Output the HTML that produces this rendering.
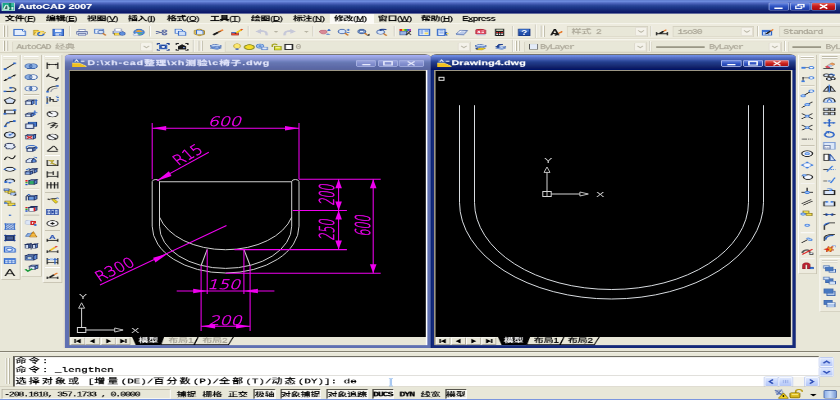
<!DOCTYPE html>
<html lang="zh-CN"><head><meta charset="utf-8"><title>AutoCAD 2007</title>
<style>
html,body{margin:0;padding:0;width:840px;height:400px;overflow:hidden;background:#e8e7d8}
#root{position:absolute;left:0;top:0;width:1024px;height:768px;transform-origin:0 0;transform:scale(0.8203125,0.5208333);overflow:hidden;will-change:transform;background:#e8e7d8;font-family:"Liberation Sans","Noto Sans CJK SC",sans-serif;font-size:12px;color:#000}
#root div,#root span,#root svg{position:absolute;box-sizing:border-box}
#root span{white-space:pre;line-height:1;-webkit-text-stroke:0.35px currentColor}
#root svg{overflow:visible}
.mono{font-family:"Liberation Mono","Noto Sans CJK SC",monospace}
.sim{font-family:"Liberation Mono","Noto Sans CJK SC",monospace;font-size:12px;letter-spacing:-1.3px}
#root i.c{font-style:normal;letter-spacing:0}
.cmd{font-family:"Liberation Mono","Noto Sans CJK SC",monospace;font-size:13.33px}
#root i.w{font-style:normal;letter-spacing:2.67px}
</style></head><body><div id="root">
<div style="left:0.0px;top:0.0px;width:1024.0px;height:26.4px;background:linear-gradient(#5a76c8 0,#7090e2 9%,#5a74ca 18%,#4058b0 30%,#2a4698 41%,#1e3a8c 52%,#182e7e 67%,#12226e 81%,#0a1668 93%,#001070 100%)"></div>
<svg style="left:2.4px;top:5.0px;" width="16" height="16" viewBox="0 0 16 16" preserveAspectRatio="none"><rect width="16" height="16" fill="#18a488"/><rect x="0.5" y="0.5" width="15" height="15" fill="none" stroke="#cfeee4" stroke-width="1"/><path d="M2.5 13L4.5 6Q6 3 7.5 6L8.5 13Z" fill="#3a6a5e" stroke="#e4fbf4" stroke-width="1.5"/><rect x="9.3" y="1" width="2.2" height="14" fill="#0b6a54"/><rect x="11.5" y="1" width="3.5" height="6" fill="#38bc9e"/><rect x="11.8" y="8.5" width="2.6" height="5" fill="#d4f2ea"/><rect x="7" y="9" width="2.6" height="3.4" fill="#c8ece2"/></svg>
<span style="left:22.0px;top:6.0px;color:#fff;font-weight:bold;font-size:13px">AutoCAD 2007</span>
<div style="left:937.0px;top:5.0px;width:25.0px;height:15.0px;background:linear-gradient(#6f8be0,#2f55c4 45%,#1c3aa6);border:1px solid #9fb0e8;border-radius:2px"></div>
<div style="left:963.0px;top:5.0px;width:25.0px;height:15.0px;background:linear-gradient(#6f8be0,#2f55c4 45%,#1c3aa6);border:1px solid #9fb0e8;border-radius:2px"></div>
<div style="left:989.0px;top:5.0px;width:30.0px;height:15.0px;background:linear-gradient(#e0605a,#c81c1c 45%,#a80c10);border:1px solid #9fb0e8;border-radius:2px"></div>
<svg style="left:937.0px;top:5.0px;" width="25" height="15" viewBox="0 0 25 15" preserveAspectRatio="none"><rect x="7" y="9.5" width="10" height="2.6" fill="#fff"/></svg>
<svg style="left:963.0px;top:5.0px;" width="25" height="15" viewBox="0 0 25 15" preserveAspectRatio="none"><rect x="10" y="3.5" width="7" height="5" fill="none" stroke="#fff" stroke-width="1.6"/><rect x="7" y="6.5" width="7" height="5" fill="#2f55c4" stroke="#fff" stroke-width="1.6"/></svg>
<svg style="left:989.0px;top:5.0px;" width="30" height="15" viewBox="0 0 30 15" preserveAspectRatio="none"><path d="M10.5 3.5L19.5 11.5M19.5 3.5L10.5 11.5" stroke="#fff" stroke-width="2.4"/></svg>
<div style="left:0.0px;top:26.0px;width:1024.0px;height:19.0px;background:#e8e7d8"></div>
<div style="left:402.3px;top:27.0px;width:53.6px;height:18.0px;background:#fbfaf6"></div>
<span style="left:6.1px;top:30.0px;font-size:12px;font-weight:500;letter-spacing:-0.4px">文件(<u>F</u>)</span>
<span style="left:56.1px;top:30.0px;font-size:12px;font-weight:500;letter-spacing:-0.4px">编辑(<u>E</u>)</span>
<span style="left:106.1px;top:30.0px;font-size:12px;font-weight:500;letter-spacing:-0.4px">视图(<u>V</u>)</span>
<span style="left:156.0px;top:30.0px;font-size:12px;font-weight:500;letter-spacing:-0.4px">插入(<u>I</u>)</span>
<span style="left:203.6px;top:30.0px;font-size:12px;font-weight:500;letter-spacing:-0.4px">格式(<u>O</u>)</span>
<span style="left:256.0px;top:30.0px;font-size:12px;font-weight:500;letter-spacing:-0.4px">工具(<u>T</u>)</span>
<span style="left:306.0px;top:30.0px;font-size:12px;font-weight:500;letter-spacing:-0.4px">绘图(<u>D</u>)</span>
<span style="left:357.2px;top:30.0px;font-size:12px;font-weight:500;letter-spacing:-0.4px">标注(<u>N</u>)</span>
<span style="left:407.2px;top:30.0px;font-size:12px;font-weight:500;letter-spacing:-0.4px">修改(<u>M</u>)</span>
<span style="left:460.8px;top:30.0px;font-size:12px;font-weight:500;letter-spacing:-0.4px">窗口(<u>W</u>)</span>
<span style="left:513.2px;top:30.0px;font-size:12px;font-weight:500;letter-spacing:-0.4px">帮助(<u>H</u>)</span>
<span style="left:563.2px;top:30.0px;font-size:12px;font-weight:500;letter-spacing:-0.4px">E<u>x</u>press</span>
<div style="left:0.0px;top:45.0px;width:1024.0px;height:56.0px;background:#edebde"></div>
<div style="left:0.0px;top:45.0px;width:1024.0px;height:1.0px;background:#fdfcf8"></div>
<div style="left:0.0px;top:74.0px;width:1024.0px;height:1.0px;background:#d5d1c0"></div>
<div style="left:0.0px;top:75.0px;width:1024.0px;height:1.0px;background:#fbfaf5"></div>
<div style="left:0.0px;top:100.0px;width:1024.0px;height:1.0px;background:#cfcbb9"></div>
<div style="left:4.0px;top:49.0px;width:2.0px;height:22.0px;background:#fff;border-right:1px solid #b4b09c"></div>
<div style="left:8.0px;top:49.0px;width:2.0px;height:22.0px;background:#fff;border-right:1px solid #b4b09c"></div>
<svg style="left:16.2px;top:53.5px;" width="16" height="16" viewBox="0 0 16 16" preserveAspectRatio="none"><path d="M1 2.5H11.5L15 6V14H1Z" fill="#e6effc" stroke="#2c64c8" stroke-width="1.3"/><path d="M11.5 2.5V6H15" fill="#fff" stroke="#2c64c8" stroke-width="1"/></svg>
<svg style="left:39.6px;top:53.5px;" width="16" height="16" viewBox="0 0 16 16" preserveAspectRatio="none"><path d="M1 4H6L7.5 5.5H13V13.5H1Z" fill="#f6d24a" stroke="#b08a14" stroke-width="1"/><path d="M1 13.5L3.5 7.5H15.5L13 13.5Z" fill="#fbe48a" stroke="#b08a14" stroke-width="1"/><path d="M9 8.5A3.5 3 0 1 0 13 12" fill="none" stroke="#2c64c8" stroke-width="1.8"/><path d="M11.5 13.8L14.8 12L12.2 10Z" fill="#2c64c8" stroke="none" stroke-width="1.2"/></svg>
<svg style="left:63.0px;top:53.5px;" width="16" height="16" viewBox="0 0 16 16" preserveAspectRatio="none"><rect x="1.5" y="2" width="13" height="12.5" fill="#4a80dc" stroke="#2c54ac" stroke-width="1"/><rect x="4" y="2.5" width="8" height="5.5" fill="#eef4fd" stroke="none" stroke-width="1"/><rect x="4.5" y="10" width="7" height="4.5" fill="#c8d8f2" stroke="none" stroke-width="1"/><rect x="9" y="10.8" width="1.8" height="3" fill="#4a80dc" stroke="none" stroke-width="1"/></svg>
<div style="left:84.1px;top:50.0px;width:1.0px;height:20.0px;background:#c5c2b2"></div>
<div style="left:85.1px;top:50.0px;width:1.0px;height:20.0px;background:#fff"></div>
<svg style="left:92.4px;top:53.5px;" width="16" height="16" viewBox="0 0 16 16" preserveAspectRatio="none"><rect x="4" y="2.5" width="8" height="4" fill="#fff" stroke="#8a96bc" stroke-width="1"/><path d="M1.5 6.5H14.5V12H1.5Z" fill="#c4cee6" stroke="#6a78a8" stroke-width="1"/><rect x="3.5" y="10.5" width="9" height="3.5" fill="#f2f5fb" stroke="#6a78a8" stroke-width="1"/><ellipse cx="8" cy="13.5" rx="5" ry="1.2" fill="#9aa8cc" stroke="none" stroke-width="1.2"/></svg>
<svg style="left:114.3px;top:53.5px;" width="16" height="16" viewBox="0 0 16 16" preserveAspectRatio="none"><path d="M1.5 2H12V10H1.5Z" fill="#e6effc" stroke="#2c64c8" stroke-width="1.2"/><ellipse cx="9" cy="7.5" rx="3.6" ry="3.4" fill="#d4e4fa" stroke="#5070b0" stroke-width="1.4"/><line x1="11.5" y1="10" x2="15" y2="14" stroke="#c87830" stroke-width="2.2"/></svg>
<svg style="left:137.1px;top:53.5px;" width="16" height="16" viewBox="0 0 16 16" preserveAspectRatio="none"><rect x="3" y="1.5" width="8" height="4" fill="#fff" stroke="#6a78a8" stroke-width="1"/><path d="M1 5.5H13V11H1Z" fill="#b8c4e0" stroke="#4a5a90" stroke-width="1"/><rect x="2.5" y="9.5" width="8" height="4" fill="#f6d84a" stroke="#a08418" stroke-width="1"/><ellipse cx="12" cy="10.5" rx="3.5" ry="3.5" fill="#5f8fdc" stroke="#24489c" stroke-width="1"/></svg>
<svg style="left:160.5px;top:53.5px;" width="16" height="16" viewBox="0 0 16 16" preserveAspectRatio="none"><ellipse cx="8.5" cy="8" rx="6.5" ry="6" fill="#4f8fe0" stroke="#2c5cb0" stroke-width="1"/><path d="M3.5 6Q8 2 13.5 6Q9 8.5 3.5 6Z" fill="#f2a030" stroke="none" stroke-width="1.2"/><path d="M4 11Q8 14 13 10.5Q8 9 4 11Z" fill="#58b858" stroke="none" stroke-width="1.2"/><path d="M1 12L6 9.5L8 13.5L2.5 15Z" fill="#e4ecf8" stroke="#9aa8cc" stroke-width="0.8"/></svg>
<div style="left:181.6px;top:50.0px;width:1.0px;height:20.0px;background:#c5c2b2"></div>
<div style="left:182.6px;top:50.0px;width:1.0px;height:20.0px;background:#fff"></div>
<svg style="left:189.0px;top:53.5px;" width="16" height="16" viewBox="0 0 16 16" preserveAspectRatio="none"><line x1="1" y1="6" x2="9" y2="8.5" stroke="#5a6a9c" stroke-width="1.6"/><line x1="1" y1="10.5" x2="9" y2="7.5" stroke="#5a6a9c" stroke-width="1.6"/><ellipse cx="11.5" cy="5.5" rx="2.3" ry="2" fill="none" stroke="#3c5098" stroke-width="1.6"/><ellipse cx="11.5" cy="11" rx="2.3" ry="2" fill="none" stroke="#3c5098" stroke-width="1.6"/></svg>
<svg style="left:212.1px;top:53.5px;" width="16" height="16" viewBox="0 0 16 16" preserveAspectRatio="none"><path d="M1.5 2H8.5L10.5 4V10H1.5Z" fill="#e6effc" stroke="#2c64c8" stroke-width="1.2"/><path d="M5.5 6H12.5L14.5 8V14H5.5Z" fill="#cfe0f8" stroke="#2c64c8" stroke-width="1.2"/></svg>
<svg style="left:234.7px;top:53.5px;" width="16" height="16" viewBox="0 0 16 16" preserveAspectRatio="none"><path d="M2 4.5L8 1.5L14.5 5V12L8 15L2 11.5Z" fill="#e8c860" stroke="#a07c20" stroke-width="1"/><path d="M4.5 4H10.5L12.5 6V11.5H4.5Z" fill="#dbe8fa" stroke="#2c64c8" stroke-width="1.1"/></svg>
<svg style="left:258.4px;top:53.5px;" width="16" height="16" viewBox="0 0 16 16" preserveAspectRatio="none"><line x1="2" y1="13" x2="8" y2="8" stroke="#1a1a1a" stroke-width="3"/><line x1="8" y1="8" x2="11" y2="5.5" stroke="#8a5020" stroke-width="2.6"/><line x1="11" y1="5.5" x2="14" y2="3" stroke="#f08030" stroke-width="2.4"/></svg>
<svg style="left:281.0px;top:53.5px;" width="16" height="16" viewBox="0 0 16 16" preserveAspectRatio="none"><rect x="1.5" y="8" width="8" height="5.5" fill="#e84830" stroke="#902010" stroke-width="1"/><rect x="1.5" y="8" width="8" height="2" fill="#3c72d4" stroke="none" stroke-width="1"/><line x1="7" y1="9" x2="13.5" y2="3" stroke="#f2c81c" stroke-width="2.6"/><line x1="12.5" y1="4" x2="14.5" y2="2" stroke="#e05020" stroke-width="2.4"/><line x1="5.5" y1="10.5" x2="7" y2="9" stroke="#1a1a1a" stroke-width="1.6"/></svg>
<div style="left:302.3px;top:50.0px;width:1.0px;height:20.0px;background:#c5c2b2"></div>
<div style="left:303.3px;top:50.0px;width:1.0px;height:20.0px;background:#fff"></div>
<svg style="left:310.9px;top:53.5px;" width="16" height="16" viewBox="0 0 16 16" preserveAspectRatio="none"><path d="M14 14Q15 4.5 6 5.5" fill="none" stroke="#c6c8d8" stroke-width="3"/><path d="M0.5 6.5L7 1.5V11Z" fill="#c6c8d8" stroke="none" stroke-width="1.2"/></svg>
<svg style="left:333.4px;top:53.0px;" width="8" height="16" viewBox="0 0 8 16" preserveAspectRatio="none"><path d="M1 7L3.5 10L6 7Z" fill="#b5b2a2"/></svg>
<svg style="left:345.0px;top:53.5px;" width="16" height="16" viewBox="0 0 16 16" preserveAspectRatio="none"><path d="M2 14Q1 4.5 10 5.5" fill="none" stroke="#c6c8d8" stroke-width="3"/><path d="M15.5 6.5L9 1.5V11Z" fill="#c6c8d8" stroke="none" stroke-width="1.2"/></svg>
<svg style="left:370.0px;top:53.0px;" width="8" height="16" viewBox="0 0 8 16" preserveAspectRatio="none"><path d="M1 7L3.5 10L6 7Z" fill="#b5b2a2"/></svg>
<div style="left:381.0px;top:50.0px;width:1.0px;height:20.0px;background:#c5c2b2"></div>
<div style="left:382.0px;top:50.0px;width:1.0px;height:20.0px;background:#fff"></div>
<svg style="left:388.3px;top:53.5px;" width="16" height="16" viewBox="0 0 16 16" preserveAspectRatio="none"><path d="M1.5 6Q3 3 6 4Q9 2.5 10.5 6Q11 10 7 11.5Q2 11 1.5 6Z" fill="#d88a98" stroke="#b86878" stroke-width="1"/><line x1="11" y1="4" x2="15" y2="4" stroke="#2c64c8" stroke-width="1.6"/><line x1="13" y1="2" x2="13" y2="6" stroke="#2c64c8" stroke-width="1.6"/><path d="M10 11Q13 9.5 14.5 12.5H9.5Z" fill="#2c64c8" stroke="none" stroke-width="1.2"/></svg>
<svg style="left:411.4px;top:53.5px;" width="16" height="16" viewBox="0 0 16 16" preserveAspectRatio="none"><ellipse cx="6" cy="6.5" rx="4.6" ry="4.3" fill="#d8e6fa" stroke="#5070b0" stroke-width="1.5"/><line x1="9.5" y1="9.5" x2="13.5" y2="14" stroke="#c87830" stroke-width="2.3"/><line x1="11.5" y1="3.5" x2="15.5" y2="3.5" stroke="#2c64c8" stroke-width="1.5"/><line x1="13.5" y1="1.5" x2="13.5" y2="5.5" stroke="#2c64c8" stroke-width="1.5"/><line x1="11.5" y1="8" x2="15" y2="8" stroke="#2c64c8" stroke-width="1.5"/></svg>
<svg style="left:434.8px;top:53.5px;" width="16" height="16" viewBox="0 0 16 16" preserveAspectRatio="none"><ellipse cx="6" cy="6.5" rx="4.6" ry="4.3" fill="#a8c4f0" stroke="#40609c" stroke-width="1.5"/><rect x="3.5" y="4.5" width="5" height="3.5" fill="#e8f0fc" stroke="#40609c" stroke-width="0.8"/><line x1="9.5" y1="9.5" x2="12.5" y2="13" stroke="#c87830" stroke-width="2.3"/><path d="M12 14.5H15.5V10.5Z" fill="#111" stroke="none" stroke-width="1.2"/></svg>
<svg style="left:457.8px;top:53.5px;" width="16" height="16" viewBox="0 0 16 16" preserveAspectRatio="none"><ellipse cx="6" cy="7.5" rx="4.6" ry="4.3" fill="#d8e6fa" stroke="#5070b0" stroke-width="1.5"/><line x1="9.5" y1="10.5" x2="13.5" y2="14.5" stroke="#c87830" stroke-width="2.3"/><path d="M5 3.5Q9 0.5 13 3.5" fill="none" stroke="#1c3c8c" stroke-width="2"/><path d="M3 3.8L7.5 1.2V6Z" fill="#1c3c8c" stroke="none" stroke-width="1.2"/></svg>
<div style="left:480.3px;top:50.0px;width:1.0px;height:20.0px;background:#c5c2b2"></div>
<div style="left:481.3px;top:50.0px;width:1.0px;height:20.0px;background:#fff"></div>
<svg style="left:485.8px;top:53.5px;" width="16" height="16" viewBox="0 0 16 16" preserveAspectRatio="none"><rect x="1" y="2" width="3" height="3" fill="#e02020" stroke="none" stroke-width="1"/><rect x="4" y="2" width="3" height="3" fill="#f0d020" stroke="none" stroke-width="1"/><rect x="7" y="2" width="3" height="3" fill="#30b040" stroke="none" stroke-width="1"/><rect x="10" y="2" width="3" height="3" fill="#3060e0" stroke="none" stroke-width="1"/><rect x="13" y="2" width="2" height="3" fill="#c030c0" stroke="none" stroke-width="1"/><rect x="1.5" y="6" width="8" height="7" fill="#9ab4e4" stroke="#40609c" stroke-width="1"/><line x1="9" y1="13.5" x2="14.5" y2="5.5" stroke="#303030" stroke-width="2"/><line x1="10" y1="6" x2="15" y2="13" stroke="#505050" stroke-width="1.6"/></svg>
<svg style="left:509.0px;top:53.5px;" width="16" height="16" viewBox="0 0 16 16" preserveAspectRatio="none"><rect x="1.5" y="2" width="13" height="12" fill="#e8f0fc" stroke="#2c64c8" stroke-width="1.6"/><rect x="3.5" y="4" width="3.5" height="8" fill="#9ab8ec" stroke="none" stroke-width="1"/><rect x="8.5" y="4" width="4.5" height="3.5" fill="#9ab8ec" stroke="none" stroke-width="1"/><rect x="8.5" y="8.5" width="4.5" height="3.5" fill="#f2dc60" stroke="none" stroke-width="1"/></svg>
<svg style="left:532.4px;top:53.5px;" width="16" height="16" viewBox="0 0 16 16" preserveAspectRatio="none"><rect x="1.5" y="2" width="9" height="12" fill="#e8f0fc" stroke="#2c64c8" stroke-width="1.6"/><rect x="3.5" y="4" width="5" height="2.5" fill="#9ab8ec" stroke="none" stroke-width="1"/><rect x="3.5" y="8" width="5" height="2.5" fill="#9ab8ec" stroke="none" stroke-width="1"/><path d="M10 6L15 10L12.5 10.5L13.8 14L12.2 14.5L11 11.3L9.5 13Z" fill="#2050b0" stroke="none" stroke-width="1.2"/><rect x="12" y="9" width="3" height="3" fill="#f2dc60" stroke="none" stroke-width="1"/></svg>
<svg style="left:555.3px;top:53.5px;" width="16" height="16" viewBox="0 0 16 16" preserveAspectRatio="none"><path d="M1 11L6 4L15 4.5L11 12Z" fill="#b8c8e8" stroke="#6078b0" stroke-width="1"/><path d="M1 11L11 12V14L1 13Z" fill="#8098c8" stroke="none" stroke-width="1.2"/><path d="M4 9L7 5.5L12 6" fill="none" stroke="#fff" stroke-width="1.2"/></svg>
<svg style="left:578.4px;top:53.5px;" width="16" height="16" viewBox="0 0 16 16" preserveAspectRatio="none"><path d="M2 3Q8 1 14 3.5V11Q8 13.5 2 11Z" fill="#e04860" stroke="#a02030" stroke-width="1"/><path d="M4.5 5L7 9M7 5L4.5 9M9 5.5H12M9 8H12" fill="none" stroke="#fff" stroke-width="1.4"/><rect x="3" y="11.5" width="11" height="2.5" fill="#c0c8e0" stroke="none" stroke-width="1"/></svg>
<svg style="left:601.0px;top:53.5px;" width="16" height="16" viewBox="0 0 16 16" preserveAspectRatio="none"><rect x="2.5" y="1" width="11" height="14" fill="#181818" stroke="none" stroke-width="1"/><rect x="4" y="2.5" width="8" height="3" fill="#c8d8c0" stroke="none" stroke-width="1"/><rect x="4" y="7" width="2" height="2" fill="#e03030" stroke="none" stroke-width="1"/><rect x="7" y="7" width="2" height="2" fill="#e03030" stroke="none" stroke-width="1"/><rect x="10" y="7" width="2" height="2" fill="#e03030" stroke="none" stroke-width="1"/><rect x="4" y="10.5" width="2" height="2.5" fill="#e8e8e8" stroke="none" stroke-width="1"/><rect x="7" y="10.5" width="2" height="2.5" fill="#e8e8e8" stroke="none" stroke-width="1"/><rect x="10" y="10.5" width="2" height="2.5" fill="#e8e8e8" stroke="none" stroke-width="1"/></svg>
<div style="left:623.8px;top:50.0px;width:1.0px;height:20.0px;background:#c5c2b2"></div>
<div style="left:624.8px;top:50.0px;width:1.0px;height:20.0px;background:#fff"></div>
<svg style="left:630.9px;top:53.5px;" width="16" height="16" viewBox="0 0 16 16" preserveAspectRatio="none"><rect x="1" y="1.5" width="14" height="13" fill="#2250ac" stroke="#12307c" stroke-width="1"/><rect x="2" y="2.5" width="12" height="4" fill="#4a7cd0" stroke="none" stroke-width="1"/><text x="8" y="13" font-family="Liberation Sans, sans-serif" font-weight="bold" font-size="12.5" fill="#fff" text-anchor="middle">?</text></svg>
<div style="left:652.2px;top:47.0px;width:1.0px;height:26.0px;background:#c5c2b2"></div>
<div style="left:653.2px;top:47.0px;width:1.0px;height:26.0px;background:#fff"></div>
<div style="left:658.3px;top:49.0px;width:2.0px;height:22.0px;background:#fff;border-right:1px solid #b4b09c"></div>
<div style="left:662.3px;top:49.0px;width:2.0px;height:22.0px;background:#fff;border-right:1px solid #b4b09c"></div>
<svg style="left:669.9px;top:53.5px;" width="16" height="16" viewBox="0 0 16 16" preserveAspectRatio="none"><text x="6.5" y="14" font-family="Liberation Sans, sans-serif" font-weight="bold" font-size="17" fill="#151515" text-anchor="middle">A</text><line x1="6.5" y1="14" x2="11" y2="10" stroke="#1a1a1a" stroke-width="2.6"/><line x1="11" y1="10" x2="15.5" y2="6.5" stroke="#e87828" stroke-width="2.4"/></svg>
<div style="left:691.2px;top:50.0px;width:98.7px;height:21.0px;background:#e8e7d8;border:1px solid #d8d4c4;border-top-color:#c9c5b4"></div>
<span class="sim" style="left:696.7px;top:55.6px;color:#aca899;"><i class="c">样式</i> 2</span>
<div style="left:773.9px;top:52.0px;width:15.0px;height:17.0px;background:#f4f2ea;border:1px solid #dedace;border-radius:2px"></div>
<svg style="left:773.9px;top:52.0px;" width="15" height="17" viewBox="0 0 15 17" preserveAspectRatio="none"><path d="M4 6.5L7.5 10.0L11 6.5" stroke="#b9b6a6" stroke-width="1.6" fill="none"/></svg>
<div style="left:793.0px;top:50.0px;width:1.0px;height:20.0px;background:#c5c2b2"></div>
<div style="left:794.0px;top:50.0px;width:1.0px;height:20.0px;background:#fff"></div>
<svg style="left:799.1px;top:53.5px;" width="16" height="16" viewBox="0 0 16 16" preserveAspectRatio="none"><line x1="1" y1="11" x2="15" y2="11" stroke="#1a1a1a" stroke-width="1.8"/><line x1="1.5" y1="8" x2="1.5" y2="14" stroke="#1a1a1a" stroke-width="1.6"/><line x1="14.5" y1="8" x2="14.5" y2="14" stroke="#1a1a1a" stroke-width="1.6"/><line x1="5" y1="10.5" x2="10" y2="6" stroke="#1a1a1a" stroke-width="2.6"/><line x1="10" y1="6" x2="13.5" y2="3" stroke="#e87828" stroke-width="2.2"/></svg>
<div style="left:820.4px;top:50.0px;width:98.7px;height:21.0px;background:#e8e7d8;border:1px solid #d8d4c4;border-top-color:#c9c5b4"></div>
<span class="sim" style="left:825.9px;top:55.6px;color:#aca899;">iso30</span>
<div style="left:903.2px;top:52.0px;width:15.0px;height:17.0px;background:#f4f2ea;border:1px solid #dedace;border-radius:2px"></div>
<svg style="left:903.2px;top:52.0px;" width="15" height="17" viewBox="0 0 15 17" preserveAspectRatio="none"><path d="M4 6.5L7.5 10.0L11 6.5" stroke="#b9b6a6" stroke-width="1.6" fill="none"/></svg>
<div style="left:922.8px;top:50.0px;width:1.0px;height:20.0px;background:#c5c2b2"></div>
<div style="left:923.8px;top:50.0px;width:1.0px;height:20.0px;background:#fff"></div>
<svg style="left:928.3px;top:53.5px;" width="16" height="16" viewBox="0 0 16 16" preserveAspectRatio="none"><rect x="1.5" y="4" width="11" height="9.5" fill="#dce8fa" stroke="#2c64c8" stroke-width="1.4"/><rect x="1.5" y="4" width="11" height="3" fill="#3c72d4" stroke="none" stroke-width="1"/><line x1="5" y1="7" x2="5" y2="13.5" stroke="#2c64c8" stroke-width="1"/><line x1="9" y1="7" x2="9" y2="13.5" stroke="#2c64c8" stroke-width="1"/><line x1="6" y1="11" x2="11" y2="6" stroke="#1a1a1a" stroke-width="2.4"/><line x1="11" y1="6" x2="14.5" y2="2.5" stroke="#e87828" stroke-width="2.2"/></svg>
<div style="left:949.6px;top:50.0px;width:98.7px;height:21.0px;background:#e8e7d8;border:1px solid #d8d4c4;border-top-color:#c9c5b4"></div>
<span class="sim" style="left:955.1px;top:55.6px;color:#aca899;">Standard</span>
<div style="left:1032.4px;top:52.0px;width:15.0px;height:17.0px;background:#f4f2ea;border:1px solid #dedace;border-radius:2px"></div>
<svg style="left:1032.4px;top:52.0px;" width="15" height="17" viewBox="0 0 15 17" preserveAspectRatio="none"><path d="M4 6.5L7.5 10.0L11 6.5" stroke="#b9b6a6" stroke-width="1.6" fill="none"/></svg>
<div style="left:4.0px;top:78.0px;width:2.0px;height:20.0px;background:#fff;border-right:1px solid #b4b09c"></div>
<div style="left:8.0px;top:78.0px;width:2.0px;height:20.0px;background:#fff;border-right:1px solid #b4b09c"></div>
<div style="left:14.6px;top:79.5px;width:171.9px;height:20.0px;background:#e8e7d8;border:1px solid #d8d4c4;border-top-color:#c9c5b4"></div>
<span class="sim" style="left:20.1px;top:85.1px;color:#aca899;">AutoCAD <i class="c">经典</i></span>
<div style="left:170.5px;top:81.5px;width:15.0px;height:16.0px;background:#f4f2ea;border:1px solid #dedace;border-radius:2px"></div>
<svg style="left:170.5px;top:81.5px;" width="15" height="16" viewBox="0 0 15 16" preserveAspectRatio="none"><path d="M4 6.0L7.5 9.5L11 6.0" stroke="#b9b6a6" stroke-width="1.6" fill="none"/></svg>
<svg style="left:190.8px;top:81.5px;" width="16" height="16" viewBox="0 0 16 16" preserveAspectRatio="none"><path d="M1 4V1.5H4M12 1.5H15V4M15 12V14.5H12M4 14.5H1V12" fill="none" stroke="#1c3c8c" stroke-width="1.5"/><rect x="3" y="3.5" width="10" height="9" fill="#3c6cc8" stroke="none" stroke-width="1"/><ellipse cx="8" cy="8" rx="2.8" ry="2.6" fill="#e8f0fc" stroke="#1c3c8c" stroke-width="1.3"/></svg>
<svg style="left:213.9px;top:81.5px;" width="16" height="16" viewBox="0 0 16 16" preserveAspectRatio="none"><path d="M1 4V1.5H4M12 1.5H15V4M15 12V14.5H12M4 14.5H1V12" fill="none" stroke="#222" stroke-width="1.5"/><path d="M3 13V7L8 3L13 7V13Z" fill="#181818" stroke="none" stroke-width="1.2"/><rect x="9" y="8" width="2.5" height="2.5" fill="#7090d0" stroke="none" stroke-width="1"/></svg>
<div style="left:235.3px;top:76.0px;width:1.0px;height:24.0px;background:#c5c2b2"></div>
<div style="left:236.3px;top:76.0px;width:1.0px;height:24.0px;background:#fff"></div>
<div style="left:240.8px;top:78.0px;width:2.0px;height:20.0px;background:#fff;border-right:1px solid #b4b09c"></div>
<div style="left:244.8px;top:78.0px;width:2.0px;height:20.0px;background:#fff;border-right:1px solid #b4b09c"></div>
<svg style="left:254.8px;top:81.5px;" width="16" height="16" viewBox="0 0 16 16" preserveAspectRatio="none"><path d="M1 10.5L6 8L15 10L10 13Z" fill="#7ca4e4" stroke="#3058a8" stroke-width="0.8"/><path d="M1 8L6 5.5L15 7.5L10 10.5Z" fill="#a4c0ee" stroke="#3058a8" stroke-width="0.8"/><path d="M1 5.5L6 3L15 5L10 8Z" fill="#c8dcf8" stroke="#3058a8" stroke-width="0.8"/></svg>
<div style="left:274.3px;top:79.5px;width:299.9px;height:20.0px;background:#e8e7d8;border:1px solid #d8d4c4;border-top-color:#c9c5b4"></div>
<div style="left:558.2px;top:81.5px;width:15.0px;height:16.0px;background:#f4f2ea;border:1px solid #dedace;border-radius:2px"></div>
<svg style="left:558.2px;top:81.5px;" width="15" height="16" viewBox="0 0 15 16" preserveAspectRatio="none"><path d="M4 6.0L7.5 9.5L11 6.0" stroke="#b9b6a6" stroke-width="1.6" fill="none"/></svg>
<svg style="left:281.0px;top:81.5px;" width="16" height="16" viewBox="0 0 16 16" preserveAspectRatio="none"><ellipse cx="8" cy="6.5" rx="4.2" ry="4.6" fill="#fbe870" stroke="#b09420" stroke-width="1"/><rect x="6.3" y="11" width="3.4" height="3" fill="#5070c0" stroke="none" stroke-width="1"/></svg>
<svg style="left:295.6px;top:81.5px;" width="16" height="16" viewBox="0 0 16 16" preserveAspectRatio="none"><ellipse cx="8" cy="8.5" rx="6" ry="4.6" fill="#f4dc28" stroke="#8a8a20" stroke-width="1.6"/></svg>
<svg style="left:310.9px;top:81.5px;" width="16" height="16" viewBox="0 0 16 16" preserveAspectRatio="none"><ellipse cx="6" cy="6.5" rx="4.6" ry="4.2" fill="#a8c8f4" stroke="#5080c8" stroke-width="1.2"/><path d="M3 6.5H9M6 3V10M4 4.2L8 8.8M8 4.2L4 8.8" fill="none" stroke="#5080c8" stroke-width="0.8"/><rect x="8" y="8.5" width="7" height="5" fill="#dce8fa" stroke="#5078c0" stroke-width="1.2"/></svg>
<svg style="left:329.1px;top:81.5px;" width="16" height="16" viewBox="0 0 16 16" preserveAspectRatio="none"><path d="M3 8V5.5Q3 2.5 6 2.5Q8.5 2.5 8.5 5" fill="none" stroke="#a4a420" stroke-width="2"/><rect x="5.5" y="7" width="8.5" height="7" fill="#d8dc30" stroke="#8a8a18" stroke-width="1"/><rect x="7" y="8.5" width="5" height="2" fill="#f4f6a0" stroke="none" stroke-width="1"/></svg>
<svg style="left:345.6px;top:81.5px;" width="16" height="16" viewBox="0 0 16 16" preserveAspectRatio="none"><rect x="1.5" y="3" width="9" height="10" fill="#fff" stroke="#222" stroke-width="1.8"/></svg>
<span class="sim" style="left:360.2px;top:85.0px;color:#aca899">0</span>
<svg style="left:577.8px;top:81.5px;" width="16" height="16" viewBox="0 0 16 16" preserveAspectRatio="none"><path d="M1 8L6 5.5L15 7.5L10 10.5Z" fill="#a4c0ee" stroke="#3058a8" stroke-width="0.8"/><path d="M1 5.5L6 3L15 5L10 8Z" fill="#c8dcf8" stroke="#3058a8" stroke-width="0.8"/><path d="M2 13.5L7 10L14 10.5L10 14Z" fill="#f2d020" stroke="#a08418" stroke-width="0.8"/><path d="M1 11L4.5 9V13.5Z" fill="#1c3c8c" stroke="none" stroke-width="1.2"/></svg>
<svg style="left:601.6px;top:81.5px;" width="16" height="16" viewBox="0 0 16 16" preserveAspectRatio="none"><path d="M2 10.5L7 8.5L15 10L10 13Z" fill="#a4c0ee" stroke="#3058a8" stroke-width="0.8"/><path d="M2 8L7 6L15 7.5L10 10.5Z" fill="#c8dcf8" stroke="#3058a8" stroke-width="0.8"/><path d="M5 8Q4 2.5 11 3.5" fill="none" stroke="#1c3c8c" stroke-width="2.2"/><path d="M1.5 6.5L7.5 5.5L5.5 10Z" fill="#1c3c8c" stroke="none" stroke-width="1.2"/></svg>
<div style="left:623.8px;top:76.0px;width:1.0px;height:24.0px;background:#c5c2b2"></div>
<div style="left:624.8px;top:76.0px;width:1.0px;height:24.0px;background:#fff"></div>
<div style="left:628.4px;top:78.0px;width:2.0px;height:20.0px;background:#fff;border-right:1px solid #b4b09c"></div>
<div style="left:632.4px;top:78.0px;width:2.0px;height:20.0px;background:#fff;border-right:1px solid #b4b09c"></div>
<div style="left:638.8px;top:79.5px;width:149.9px;height:20.0px;background:#e8e7d8;border:1px solid #d8d4c4;border-top-color:#c9c5b4"></div>
<div style="left:772.7px;top:81.5px;width:15.0px;height:16.0px;background:#f4f2ea;border:1px solid #dedace;border-radius:2px"></div>
<svg style="left:772.7px;top:81.5px;" width="15" height="16" viewBox="0 0 15 16" preserveAspectRatio="none"><path d="M4 6.0L7.5 9.5L11 6.0" stroke="#b9b6a6" stroke-width="1.6" fill="none"/></svg>
<svg style="left:644.9px;top:84.0px;" width="12" height="12" viewBox="0 0 12 12" preserveAspectRatio="none"><rect x="0.5" y="0.5" width="10" height="10" fill="#e4ecf8" stroke="#555"/></svg>
<span class="sim" style="left:658.3px;top:85.0px;color:#aca899">ByLayer</span>
<div style="left:790.6px;top:79.0px;width:1.0px;height:19.0px;background:#c5c2b2"></div>
<div style="left:791.6px;top:79.0px;width:1.0px;height:19.0px;background:#fff"></div>
<div style="left:794.2px;top:79.5px;width:159.1px;height:20.0px;background:#e8e7d8;border:1px solid #d8d4c4;border-top-color:#c9c5b4"></div>
<div style="left:937.3px;top:81.5px;width:15.0px;height:16.0px;background:#f4f2ea;border:1px solid #dedace;border-radius:2px"></div>
<svg style="left:937.3px;top:81.5px;" width="15" height="16" viewBox="0 0 15 16" preserveAspectRatio="none"><path d="M4 6.0L7.5 9.5L11 6.0" stroke="#b9b6a6" stroke-width="1.6" fill="none"/></svg>
<div style="left:799.7px;top:89.0px;width:59.7px;height:2.6px;background:#9a9786"></div>
<span class="sim" style="left:864.3px;top:85.0px;color:#aca899">ByLayer</span>
<div style="left:956.3px;top:79.0px;width:1.0px;height:19.0px;background:#c5c2b2"></div>
<div style="left:957.3px;top:79.0px;width:1.0px;height:19.0px;background:#fff"></div>
<div style="left:960.6px;top:79.5px;width:158.5px;height:20.0px;background:#e8e7d8;border:1px solid #d8d4c4;border-top-color:#c9c5b4"></div>
<div style="left:966.1px;top:89.0px;width:34.7px;height:2.6px;background:#9a9786"></div>
<span class="sim" style="left:1006.3px;top:85.0px;color:#aca899">ByLayer</span>
<div style="left:76.0px;top:101.0px;width:896.0px;height:568.0px;background:#e6e3d3"></div>
<div style="left:0.0px;top:101.0px;width:76.5px;height:567.0px;background:#e8e7d8"></div>
<div style="left:971.6px;top:101.0px;width:52.4px;height:567.0px;background:#e8e7d8"></div>
<div style="left:0.0px;top:668.0px;width:1024.0px;height:100.0px;background:#e8e7d8"></div>
<div style="left:79.4px;top:103.8px;width:445.4px;height:564.4px;background:#726e60;border-radius:7px 7px 0 0"></div>
<div style="left:79.4px;top:105.2px;width:445.4px;height:563.0px;background:#5f70b2;border-radius:6px 6px 0 0"></div>
<div style="left:79.4px;top:105.2px;width:445.4px;height:29.0px;background:linear-gradient(#a4aef4 0,#a4aef4 6%,#98a2e0 18%,#8894d0 31%,#7c8ac8 38%,#6a7cb8 48%,#6474b0 58%,#6270ac 68%,#5c6aa8 81%,#5a66a0 95%);border-radius:6px 6px 0 0"></div>
<div style="left:83.7px;top:134.0px;width:436.9px;height:529.0px;background:#9c9684"></div>
<div style="left:518.6px;top:135.0px;width:2.0px;height:528.0px;background:#fff"></div>
<div style="left:85.3px;top:136.0px;width:433.3px;height:510.5px;background:#000"></div>
<div style="left:85.3px;top:646.5px;width:433.3px;height:16.5px;background:#e8e7d8"></div>
<svg style="left:86.9px;top:112.2px;" width="19" height="18" viewBox="0 0 18 16" preserveAspectRatio="none"><path d="M1 15L1 8L9 8L17 13L17 15Z" fill="#f0c020"/><path d="M1 8L9 8L17 13L17 15" fill="none" stroke="#fff4b0" stroke-width="0.8"/><rect x="2" y="2" width="9" height="5" fill="#4868b8"/><path d="M4 6L6 2.5L8 6" stroke="#fff" stroke-width="1.2" fill="none"/><rect x="11" y="4" width="4" height="2" fill="#d8e0f0"/></svg>
<span style="left:106.5px;top:114.2px;color:#e2e5fb;font-weight:bold;font-size:13px;letter-spacing:1.1px">D:\xh-cad整理\xh测验\c椅子.dwg</span>
<div style="left:486.3px;top:114.8px;width:30.5px;height:13.4px;background:linear-gradient(#a0aae0,#8490d0 50%,#7884c4);border:1px solid #aab4e4;border-radius:2px"></div>
<svg style="left:486.3px;top:114.8px;" width="30.5" height="13.4" viewBox="0 0 30.5 13.4" preserveAspectRatio="none"><path d="M11 3L19.5 10.5M19.5 3L11 10.5" stroke="#e6e9fc" stroke-width="2"/></svg>
<div style="left:460.8px;top:114.8px;width:24.0px;height:13.4px;background:linear-gradient(#a0aae0,#8490d0 50%,#7884c4);border:1px solid #aab4e4;border-radius:2px"></div>
<svg style="left:460.8px;top:114.8px;" width="24" height="13.4" viewBox="0 0 24 13.4" preserveAspectRatio="none"><rect x="7" y="3.2" width="10" height="6.6" fill="none" stroke="#e6e9fc" stroke-width="1.8"/></svg>
<div style="left:433.8px;top:114.8px;width:24.5px;height:13.4px;background:linear-gradient(#a0aae0,#8490d0 50%,#7884c4);border:1px solid #aab4e4;border-radius:2px"></div>
<svg style="left:433.8px;top:114.8px;" width="24.5" height="13.4" viewBox="0 0 24.5 13.4" preserveAspectRatio="none"><rect x="7.5" y="8" width="10" height="2.4" fill="#e6e9fc"/></svg>
<div style="left:85.8px;top:647.5px;width:17.9px;height:14.5px;background:#e8e7d8;border:1px solid #fff;border-right-color:#aca899;border-bottom-color:#aca899"></div>
<svg style="left:85.8px;top:647.8px;" width="18" height="14" viewBox="0 0 18 14" preserveAspectRatio="none"><path d="M5.5 3V11" stroke="#000" stroke-width="1.8"/><path d="M12.5 2.5L6.5 7L12.5 11.5Z" fill="#000"/></svg>
<div style="left:104.3px;top:647.5px;width:17.9px;height:14.5px;background:#e8e7d8;border:1px solid #fff;border-right-color:#aca899;border-bottom-color:#aca899"></div>
<svg style="left:104.3px;top:647.8px;" width="18" height="14" viewBox="0 0 18 14" preserveAspectRatio="none"><path d="M11.5 2.5L5.5 7L11.5 11.5Z" fill="#000"/></svg>
<div style="left:122.8px;top:647.5px;width:17.9px;height:14.5px;background:#e8e7d8;border:1px solid #fff;border-right-color:#aca899;border-bottom-color:#aca899"></div>
<svg style="left:122.8px;top:647.8px;" width="18" height="14" viewBox="0 0 18 14" preserveAspectRatio="none"><path d="M6.5 2.5L12.5 7L6.5 11.5Z" fill="#000"/></svg>
<div style="left:141.3px;top:647.5px;width:17.9px;height:14.5px;background:#e8e7d8;border:1px solid #fff;border-right-color:#aca899;border-bottom-color:#aca899"></div>
<svg style="left:141.3px;top:647.8px;" width="18" height="14" viewBox="0 0 18 14" preserveAspectRatio="none"><path d="M12.5 3V11" stroke="#000" stroke-width="1.8"/><path d="M5.5 2.5L11.5 7L5.5 11.5Z" fill="#000"/></svg>
<svg style="left:85.3px;top:646.5px;" width="433.2999999999999" height="16.5" viewBox="0 0 433.2999999999999 16.5" preserveAspectRatio="none"><path d="M76.00000000000001 0 L80.40000000000002 15 L110.50000000000001 15 L114.50000000000001 0Z" fill="#000"/><path d="M114.50000000000001 0 L111.00000000000001 14.8 L151.5 14.8 L156.5 0" fill="#e8e7d8" stroke="#000" stroke-width="1.3"/><path d="M156.5 0 L152.0 14.8 L193.5 14.8 L199.5 0" fill="#e8e7d8" stroke="#000" stroke-width="1.3"/></svg>
<span style="left:168.9px;top:648.1px;color:#fff;font-size:12px">模型</span>
<span style="left:205.3px;top:648.1px;color:#a29f92;font-size:12px">布局1</span>
<span style="left:246.8px;top:648.1px;color:#a29f92;font-size:12px">布局2</span>
<div style="left:524.8px;top:103.8px;width:445.2px;height:564.4px;background:#726e60;border-radius:7px 7px 0 0"></div>
<div style="left:524.8px;top:105.2px;width:445.2px;height:563.0px;background:#14297a;border-radius:6px 6px 0 0"></div>
<div style="left:524.8px;top:105.2px;width:445.2px;height:29.0px;background:linear-gradient(#6a84d8 0,#6e8ee6 8%,#5a72c8 18%,#4660b4 31%,#3450a4 38%,#24408e 48%,#1e3684 58%,#1a3078 68%,#142670 78%,#0e1c64 88%,#001468 97%);border-radius:6px 6px 0 0"></div>
<div style="left:524.8px;top:134.2px;width:1.6px;height:534.0px;background:#001c6c"></div>
<div style="left:529.1px;top:134.0px;width:436.7px;height:529.0px;background:#9c9684"></div>
<div style="left:963.8px;top:135.0px;width:2.0px;height:528.0px;background:#e6e3d2"></div>
<div style="left:530.7px;top:136.0px;width:433.1px;height:510.5px;background:#000"></div>
<div style="left:530.7px;top:646.5px;width:433.1px;height:16.5px;background:#e8e7d8"></div>
<svg style="left:532.3px;top:112.2px;" width="19" height="18" viewBox="0 0 18 16" preserveAspectRatio="none"><path d="M1 15L1 8L9 8L17 13L17 15Z" fill="#f0c020"/><path d="M1 8L9 8L17 13L17 15" fill="none" stroke="#fff4b0" stroke-width="0.8"/><rect x="2" y="2" width="9" height="5" fill="#4868b8"/><path d="M4 6L6 2.5L8 6" stroke="#fff" stroke-width="1.2" fill="none"/><rect x="11" y="4" width="4" height="2" fill="#d8e0f0"/></svg>
<span style="left:550.5px;top:114.2px;color:#fff;font-weight:bold;font-size:13px;letter-spacing:0.2px">Drawing4.dwg</span>
<div style="left:931.5px;top:114.8px;width:30.5px;height:13.4px;background:linear-gradient(#e8746a,#cc2420 50%,#a81010);border:1px solid #aebcf0;border-radius:2px"></div>
<svg style="left:931.5px;top:114.8px;" width="30.5" height="13.4" viewBox="0 0 30.5 13.4" preserveAspectRatio="none"><path d="M11 3L19.5 10.5M19.5 3L11 10.5" stroke="#fff" stroke-width="2"/></svg>
<div style="left:906.0px;top:114.8px;width:24.0px;height:13.4px;background:linear-gradient(#7a94e6,#3457c6 50%,#2040a8);border:1px solid #aebcf0;border-radius:2px"></div>
<svg style="left:906.0px;top:114.8px;" width="24" height="13.4" viewBox="0 0 24 13.4" preserveAspectRatio="none"><rect x="7" y="3.2" width="10" height="6.6" fill="none" stroke="#fff" stroke-width="1.8"/></svg>
<div style="left:879.0px;top:114.8px;width:24.5px;height:13.4px;background:linear-gradient(#7a94e6,#3457c6 50%,#2040a8);border:1px solid #aebcf0;border-radius:2px"></div>
<svg style="left:879.0px;top:114.8px;" width="24.5" height="13.4" viewBox="0 0 24.5 13.4" preserveAspectRatio="none"><rect x="7.5" y="8" width="10" height="2.4" fill="#fff"/></svg>
<div style="left:531.2px;top:647.5px;width:17.9px;height:14.5px;background:#e8e7d8;border:1px solid #fff;border-right-color:#aca899;border-bottom-color:#aca899"></div>
<svg style="left:531.2px;top:647.8px;" width="18" height="14" viewBox="0 0 18 14" preserveAspectRatio="none"><path d="M5.5 3V11" stroke="#000" stroke-width="1.8"/><path d="M12.5 2.5L6.5 7L12.5 11.5Z" fill="#000"/></svg>
<div style="left:549.7px;top:647.5px;width:17.9px;height:14.5px;background:#e8e7d8;border:1px solid #fff;border-right-color:#aca899;border-bottom-color:#aca899"></div>
<svg style="left:549.7px;top:647.8px;" width="18" height="14" viewBox="0 0 18 14" preserveAspectRatio="none"><path d="M11.5 2.5L5.5 7L11.5 11.5Z" fill="#000"/></svg>
<div style="left:568.2px;top:647.5px;width:17.9px;height:14.5px;background:#e8e7d8;border:1px solid #fff;border-right-color:#aca899;border-bottom-color:#aca899"></div>
<svg style="left:568.2px;top:647.8px;" width="18" height="14" viewBox="0 0 18 14" preserveAspectRatio="none"><path d="M6.5 2.5L12.5 7L6.5 11.5Z" fill="#000"/></svg>
<div style="left:586.7px;top:647.5px;width:17.9px;height:14.5px;background:#e8e7d8;border:1px solid #fff;border-right-color:#aca899;border-bottom-color:#aca899"></div>
<svg style="left:586.7px;top:647.8px;" width="18" height="14" viewBox="0 0 18 14" preserveAspectRatio="none"><path d="M12.5 3V11" stroke="#000" stroke-width="1.8"/><path d="M5.5 2.5L11.5 7L5.5 11.5Z" fill="#000"/></svg>
<svg style="left:530.7px;top:646.5px;" width="433.1" height="16.5" viewBox="0 0 433.1 16.5" preserveAspectRatio="none"><path d="M76.0 0 L80.4 15 L110.5 15 L114.5 0Z" fill="#000"/><path d="M114.5 0 L111.0 14.8 L151.5 14.8 L156.5 0" fill="#e8e7d8" stroke="#000" stroke-width="1.3"/><path d="M156.5 0 L152.0 14.8 L193.5 14.8 L199.5 0" fill="#e8e7d8" stroke="#000" stroke-width="1.3"/></svg>
<span style="left:614.3px;top:648.1px;color:#fff;font-size:12px">模型</span>
<span style="left:650.7px;top:648.1px;color:#000;font-size:12px">布局1</span>
<span style="left:692.2px;top:648.1px;color:#000;font-size:12px">布局2</span>
<div style="left:0.0px;top:673.9px;width:1024.0px;height:1.7px;background:#858172"></div>
<div style="left:0.0px;top:675.8px;width:1024.0px;height:1.2px;background:#f4f3ea"></div>
<div style="left:6.1px;top:687.4px;width:2.0px;height:49.9px;background:#fff;border-right:1px solid #b4b09c"></div>
<div style="left:10.1px;top:687.4px;width:2.0px;height:49.9px;background:#fff;border-right:1px solid #b4b09c"></div>
<div style="left:16.3px;top:684.1px;width:982.1px;height:57.6px;background:#fff;border-left:2px solid #55534a;border-top:2px solid #6e6c62"></div>
<div style="left:17.7px;top:720.8px;width:980.7px;height:1.6px;background:#bdbbb2"></div>
<span class="cmd" style="left:18.9px;top:687.2px;color:#000"><i class="w">命令</i>:</span>
<span class="cmd" style="left:18.9px;top:703.5px;color:#000"><i class="w">命令</i>: _lengthen</span>
<span class="cmd" style="left:18.9px;top:726.3px;color:#000"><i class="w">选择对象或</i> [<i class="w">增量</i>(DE)/<i class="w">百分数</i>(P)/<i class="w">全部</i>(T)/<i class="w">动态</i>(DY)]: de</span>
<div style="left:998.4px;top:685.4px;width:18.9px;height:37.4px;background:#f4f3ee"></div>
<div style="left:999.0px;top:687.0px;width:17.4px;height:16.9px;background:linear-gradient(#dfe8fd,#c3d3fb 60%,#b4c6f6);border:1px solid #fff;border-radius:2px;box-shadow:0 0 0 1px #b9c8f0"></div>
<svg style="left:999.0px;top:687.0px;" width="17.432380952380868" height="16.895999999999958" viewBox="0 0 17.432380952380868 16.895999999999958" preserveAspectRatio="none"><path d="M4.716190476190434 10.447999999999979L8.716190476190434 6.447999999999979L12.716190476190434 10.447999999999979" stroke="#3050b8" stroke-width="2.4" fill="none"/></svg>
<div style="left:999.0px;top:705.8px;width:17.4px;height:16.7px;background:linear-gradient(#dfe8fd,#c3d3fb 60%,#b4c6f6);border:1px solid #fff;border-radius:2px;box-shadow:0 0 0 1px #b9c8f0"></div>
<svg style="left:999.0px;top:705.8px;" width="17.432380952380868" height="16.70399999999995" viewBox="0 0 17.432380952380868 16.70399999999995" preserveAspectRatio="none"><path d="M4.716190476190434 6.351999999999975L8.716190476190434 10.351999999999975L12.716190476190434 6.351999999999975" stroke="#3050b8" stroke-width="2.4" fill="none"/></svg>
<div style="left:931.4px;top:723.5px;width:67.0px;height:18.6px;background:#f6f5f0"></div>
<div style="left:932.0px;top:724.4px;width:16.5px;height:17.3px;background:linear-gradient(#dfe8fd,#c3d3fb 60%,#b4c6f6);border:1px solid #fff;border-radius:2px;box-shadow:0 0 0 1px #b9c8f0"></div>
<svg style="left:932.0px;top:724.4px;" width="16.457142857142912" height="17.279999999999973" viewBox="0 0 16.457142857142912 17.279999999999973" preserveAspectRatio="none"><path d="M10.228571428571456 4.639999999999986L6.228571428571456 8.639999999999986L10.228571428571456 12.639999999999986" stroke="#3050b8" stroke-width="2.4" fill="none"/></svg>
<div style="left:948.8px;top:724.4px;width:17.4px;height:17.3px;background:linear-gradient(#dfe8fd,#c3d3fb 60%,#b4c6f6);border:1px solid #fff;border-radius:2px;box-shadow:0 0 0 1px #b9c8f0"></div>
<svg style="left:948.8px;top:724.4px;" width="17.432380952381095" height="17.279999999999973" viewBox="0 0 17.432380952381095 17.279999999999973" preserveAspectRatio="none"><path d="M6.2161904761905475 5.639999999999986V11.639999999999986M8.716190476190548 5.639999999999986V11.639999999999986M11.216190476190548 5.639999999999986V11.639999999999986" stroke="#8aa0e0" stroke-width="1"/></svg>
<div style="left:981.1px;top:724.4px;width:16.6px;height:17.3px;background:linear-gradient(#dfe8fd,#c3d3fb 60%,#b4c6f6);border:1px solid #fff;border-radius:2px;box-shadow:0 0 0 1px #b9c8f0"></div>
<svg style="left:981.1px;top:724.4px;" width="16.579047619047742" height="17.279999999999973" viewBox="0 0 16.579047619047742 17.279999999999973" preserveAspectRatio="none"><path d="M6.289523809523871 4.639999999999986L10.289523809523871 8.639999999999986L6.289523809523871 12.639999999999986" stroke="#3050b8" stroke-width="2.4" fill="none"/></svg>
<div style="left:0.0px;top:743.0px;width:1024.0px;height:25.0px;background:#e8e7d8"></div>
<div style="left:0.0px;top:742.3px;width:1024.0px;height:1.2px;background:#c9c5b2"></div>
<div style="left:0.0px;top:766.2px;width:1024.0px;height:1.8px;background:#7a96df"></div>
<div style="left:2.4px;top:746.9px;width:206.0px;height:18.8px;border:1px solid #aca899;border-right-color:#fff;border-bottom-color:#fff"></div>
<span class="sim" style="left:4.9px;top:751.7px;color:#000">-208.1618, 357.1733 , 0.0000</span>
<span class="" style="left:215.4px;top:751.5px;width:23.2px;text-align:center;font-size:12px">捕捉</span>
<span class="" style="left:246.7px;top:751.5px;width:23.2px;text-align:center;font-size:12px">栅格</span>
<span class="" style="left:277.9px;top:751.5px;width:23.9px;text-align:center;font-size:12px">正交</span>
<div style="left:309.4px;top:746.9px;width:26.7px;height:18.8px;background:#f6f5ee;border:1.5px solid #3c3a34;border-right-color:#fff;border-bottom-color:#fff;box-shadow:1px 1px 0 #8c8a80 inset"></div>
<span class="" style="left:309.4px;top:751.5px;width:26.7px;text-align:center;font-size:12px">极轴</span>
<div style="left:341.9px;top:746.9px;width:49.4px;height:18.8px;background:#f6f5ee;border:1.5px solid #3c3a34;border-right-color:#fff;border-bottom-color:#fff;box-shadow:1px 1px 0 #8c8a80 inset"></div>
<span class="" style="left:341.9px;top:751.5px;width:49.4px;text-align:center;font-size:12px">对象捕捉</span>
<div style="left:397.8px;top:746.9px;width:51.1px;height:18.8px;background:#f6f5ee;border:1.5px solid #3c3a34;border-right-color:#fff;border-bottom-color:#fff;box-shadow:1px 1px 0 #8c8a80 inset"></div>
<span class="" style="left:397.8px;top:751.5px;width:51.1px;text-align:center;font-size:12px">对象追踪</span>
<div style="left:453.5px;top:746.9px;width:26.2px;height:18.8px;background:#f6f5ee;border:1.5px solid #3c3a34;border-right-color:#fff;border-bottom-color:#fff;box-shadow:1px 1px 0 #8c8a80 inset"></div>
<span class="sim" style="left:453.5px;top:751.5px;width:26.2px;text-align:center;font-weight:bold">DUCS</span>
<span class="sim" style="left:487.1px;top:751.5px;width:17.6px;text-align:center;font-weight:bold">DYN</span>
<span class="" style="left:512.7px;top:751.5px;width:22.4px;text-align:center;font-size:12px">线宽</span>
<div style="left:543.1px;top:746.9px;width:25.5px;height:18.8px;background:#f6f5ee;border:1.5px solid #3c3a34;border-right-color:#fff;border-bottom-color:#fff;box-shadow:1px 1px 0 #8c8a80 inset"></div>
<span class="" style="left:543.1px;top:751.5px;width:25.5px;text-align:center;font-size:12px">模型</span>
<svg style="left:941.1px;top:746.1px;" width="36" height="20" viewBox="0 0 36 20" preserveAspectRatio="none"><path d="M4 3L14 14M12 2L6 12" stroke="#5670b0" stroke-width="2"/><circle cx="9" cy="7" r="4" fill="none" stroke="#8898c8" stroke-width="1.4"/><path d="M14 8L8 19H20Z" fill="#f2d21c" stroke="#806a00" stroke-width="1"/><rect x="13.3" y="12" width="1.6" height="4" fill="#000"/></svg>
<svg style="left:960.6px;top:746.1px;" width="20" height="20" viewBox="0 0 20 20" preserveAspectRatio="none"><path d="M9 9V6Q9 2 13 2Q17 2 17 6" fill="none" stroke="#b89a10" stroke-width="2.2"/><rect x="2" y="8" width="12" height="10" rx="1.5" fill="#d8b81c" stroke="#7a6400" stroke-width="1"/><rect x="4" y="10" width="8" height="3" fill="#f4e47a"/></svg>
<svg style="left:987.4px;top:754.6px;" width="10" height="8" viewBox="0 0 10 8" preserveAspectRatio="none"><path d="M0 1H9L4.5 6Z" fill="#000"/></svg>
<div style="left:1003.9px;top:749.4px;width:15.8px;height:15.4px;background:linear-gradient(90deg,#8fb0e8,#c8dcf8 50%,#7f9fd8);border:1.5px solid #3a5a9c;border-radius:2px"></div>
<div style="left:0.7px;top:104.6px;width:23.9px;height:432.6px;background:#edebde;border-left:1px solid #fff;border-top:1.5px solid #fff;border-right:1px solid #c6c2b0;border-bottom:1.6px solid #c6c2b0"></div>
<div style="left:3.7px;top:107.7px;width:16.9px;height:1.2px;background:#fff"></div>
<div style="left:3.7px;top:108.9px;width:16.9px;height:1.2px;background:#bdb9a6"></div>
<div style="left:3.7px;top:111.3px;width:16.9px;height:1.2px;background:#fff"></div>
<div style="left:3.7px;top:112.5px;width:16.9px;height:1.2px;background:#bdb9a6"></div>
<svg style="left:4.1px;top:118.7px;" width="16" height="16" viewBox="0 0 16 16" preserveAspectRatio="none"><line x1="2" y1="14" x2="14" y2="2.5" stroke="#1a1a1a" stroke-width="1.5"/><rect x="0.6000000000000001" y="12.200000000000001" width="3.2" height="3.2" fill="#2c64c8"/><rect x="12.200000000000001" y="1.0" width="3.2" height="3.2" fill="#2c64c8"/></svg>
<svg style="left:4.1px;top:140.7px;" width="16" height="16" viewBox="0 0 16 16" preserveAspectRatio="none"><line x1="1" y1="14" x2="15" y2="2.5" stroke="#1a1a1a" stroke-width="1.5"/><rect x="6.4" y="6.6" width="3.2" height="3.2" fill="#2c64c8"/><path d="M0.5 14.5L4.5 13.2L2.5 10.6Z" fill="#1a1a1a" stroke="none" stroke-width="1.2"/><path d="M15.5 2L11.5 3.3L13.5 5.9Z" fill="#1a1a1a" stroke="none" stroke-width="1.2"/></svg>
<svg style="left:4.1px;top:162.7px;" width="16" height="16" viewBox="0 0 16 16" preserveAspectRatio="none"><path d="M2 12.5H11.5A3.3 3.3 0 0 0 11.5 5.5H9" fill="none" stroke="#1a1a1a" stroke-width="1.5"/><rect x="0.3999999999999999" y="10.9" width="3.2" height="3.2" fill="#2c64c8"/><rect x="9.4" y="10.9" width="3.2" height="3.2" fill="#2c64c8"/><rect x="7.4" y="3.9" width="3.2" height="3.2" fill="#2c64c8"/></svg>
<svg style="left:4.1px;top:184.7px;" width="16" height="16" viewBox="0 0 16 16" preserveAspectRatio="none"><path d="M8 2.5L14.5 7L12 13.5H4L1.5 7Z" fill="#d4e2f8" stroke="#1a1a1a" stroke-width="1.5"/></svg>
<svg style="left:4.1px;top:206.7px;" width="16" height="16" viewBox="0 0 16 16" preserveAspectRatio="none"><rect x="2" y="4.5" width="12" height="7" fill="#e4eefc" stroke="#1a1a1a" stroke-width="1.6"/><rect x="0.3999999999999999" y="9.9" width="3.2" height="3.2" fill="#2c64c8"/><rect x="12.4" y="2.9" width="3.2" height="3.2" fill="#2c64c8"/></svg>
<svg style="left:4.1px;top:228.7px;" width="16" height="16" viewBox="0 0 16 16" preserveAspectRatio="none"><path d="M2.5 13.5Q3 4.5 13.5 3.5" fill="none" stroke="#1a1a1a" stroke-width="1.5"/><rect x="0.8999999999999999" y="11.9" width="3.2" height="3.2" fill="#2c64c8"/><rect x="11.9" y="1.9" width="3.2" height="3.2" fill="#2c64c8"/><rect x="4.4" y="4.9" width="3.2" height="3.2" fill="#2c64c8"/></svg>
<svg style="left:4.1px;top:250.7px;" width="16" height="16" viewBox="0 0 16 16" preserveAspectRatio="none"><ellipse cx="8" cy="8" rx="6.5" ry="5.8" fill="#d4e2f8" stroke="#1a1a1a" stroke-width="1.5"/><line x1="8" y1="8" x2="12" y2="5" stroke="#2c64c8" stroke-width="1.2"/><rect x="6.7" y="6.7" width="2.6" height="2.6" fill="#2c64c8"/></svg>
<svg style="left:4.1px;top:272.7px;" width="16" height="16" viewBox="0 0 16 16" preserveAspectRatio="none"><path d="M3 6Q1 3 5 3Q7 1 9.5 3Q14 2.5 13 6.5Q16 9 12.5 11Q11 14.5 7.5 12.5Q3 14 3.5 10Q0 8 3 6Z" fill="#e4ecfa" stroke="#2c3658" stroke-width="1.4"/></svg>
<svg style="left:4.1px;top:294.7px;" width="16" height="16" viewBox="0 0 16 16" preserveAspectRatio="none"><path d="M1.5 12Q4 3 8 8T14.5 3.5" fill="none" stroke="#1a1a1a" stroke-width="1.5"/></svg>
<svg style="left:4.1px;top:316.7px;" width="16" height="16" viewBox="0 0 16 16" preserveAspectRatio="none"><ellipse cx="8" cy="8" rx="6" ry="3.8" fill="#e4eefc" stroke="#1a1a1a" stroke-width="1.5"/><path d="M0 8L3 5.8V10.2Z" fill="#2c64c8" stroke="none" stroke-width="1.2"/><path d="M16 8L13 5.8V10.2Z" fill="#2c64c8" stroke="none" stroke-width="1.2"/></svg>
<svg style="left:4.1px;top:338.8px;" width="16" height="16" viewBox="0 0 16 16" preserveAspectRatio="none"><path d="M3 10Q1 5 8 4.5Q15 5 13 10" fill="none" stroke="#1a1a1a" stroke-width="1.5"/><ellipse cx="8" cy="9" rx="4.5" ry="2.5" fill="#d4e2f8" stroke="#8aa8dc" stroke-width="1"/><rect x="1.4" y="8.9" width="3.2" height="3.2" fill="#2c64c8"/><rect x="6.7" y="10.7" width="2.6" height="2.6" fill="#2c64c8"/></svg>
<svg style="left:4.1px;top:360.8px;" width="16" height="16" viewBox="0 0 16 16" preserveAspectRatio="none"><rect x="2" y="3" width="8" height="5" fill="#f0dc50" stroke="#807020" stroke-width="1"/><rect x="6" y="6" width="8" height="5" fill="#f0dc50" stroke="#807020" stroke-width="1"/><rect x="1" y="1.5" width="6" height="3.5" fill="#8ab0ec" stroke="#1c3c8c" stroke-width="0.8"/><rect x="9" y="9" width="6" height="4.5" fill="#a8c4f0" stroke="#1c3c8c" stroke-width="0.8"/><path d="M12 14.5H15.5V11Z" fill="#111" stroke="none" stroke-width="1.2"/></svg>
<svg style="left:4.1px;top:382.8px;" width="16" height="16" viewBox="0 0 16 16" preserveAspectRatio="none"><rect x="2" y="3" width="7" height="4.5" fill="#f0dc50" stroke="#807020" stroke-width="1"/><rect x="6" y="7" width="8" height="5" fill="#f0dc50" stroke="#807020" stroke-width="1"/><rect x="1" y="5.5" width="4" height="2.5" fill="#3c72d4" stroke="none" stroke-width="1"/><rect x="11" y="10.5" width="4" height="2.5" fill="#3c72d4" stroke="none" stroke-width="1"/></svg>
<svg style="left:4.1px;top:404.8px;" width="16" height="16" viewBox="0 0 16 16" preserveAspectRatio="none"><rect x="6.8" y="7" width="2.6" height="2.6" fill="#2c64c8" stroke="none" stroke-width="1"/></svg>
<svg style="left:4.1px;top:426.8px;" width="16" height="16" viewBox="0 0 16 16" preserveAspectRatio="none"><rect x="2.5" y="3" width="11" height="10" fill="#b8d0f4" stroke="#2c64c8" stroke-width="1"/><path d="M2.5 7L6.5 3M2.5 11L10.5 3M4.5 13L13.5 4M8.5 13L13.5 8" fill="none" stroke="#1c3c8c" stroke-width="1"/><path d="M1 3H15M1 13H15M2.5 1.5V14.5M13.5 1.5V14.5" fill="none" stroke="#2c64c8" stroke-width="1.2"/></svg>
<svg style="left:4.1px;top:448.8px;" width="16" height="16" viewBox="0 0 16 16" preserveAspectRatio="none"><rect x="2.5" y="3" width="11" height="10" fill="#20283c" stroke="#1c3c8c" stroke-width="1"/><path d="M1 3H15M1 13H15M2.5 1.5V14.5M13.5 1.5V14.5" fill="none" stroke="#1c3c8c" stroke-width="1.4"/><rect x="4" y="5" width="8" height="6" fill="#445c94" stroke="none" stroke-width="1"/></svg>
<svg style="left:4.1px;top:470.8px;" width="16" height="16" viewBox="0 0 16 16" preserveAspectRatio="none"><path d="M1.5 3H10L14.5 7V13H1.5Z" fill="#c4d8f6" stroke="#2c64c8" stroke-width="1.5"/><ellipse cx="7.5" cy="8.5" rx="3.6" ry="2.6" fill="#f4f8ff" stroke="#2c64c8" stroke-width="1.3"/></svg>
<svg style="left:4.1px;top:492.8px;" width="16" height="16" viewBox="0 0 16 16" preserveAspectRatio="none"><rect x="1.5" y="3.5" width="13" height="9.5" fill="#e4eefc" stroke="#2c64c8" stroke-width="1.5"/><rect x="1.5" y="3.5" width="13" height="3" fill="#4a80dc" stroke="none" stroke-width="1"/><line x1="6" y1="6.5" x2="6" y2="13" stroke="#2c64c8" stroke-width="1"/><line x1="10.5" y1="6.5" x2="10.5" y2="13" stroke="#2c64c8" stroke-width="1"/><line x1="1.5" y1="9.8" x2="14.5" y2="9.8" stroke="#2c64c8" stroke-width="1"/></svg>
<svg style="left:4.1px;top:514.8px;" width="16" height="16" viewBox="0 0 16 16" preserveAspectRatio="none"><text x="8" y="14.5" font-family="Liberation Sans, sans-serif" font-size="18" fill="#111" text-anchor="middle" transform="translate(8,0) scale(1.12,1) translate(-8,0)">A</text></svg>
<div style="left:26.3px;top:104.6px;width:24.4px;height:426.4px;background:#edebde;border-left:1px solid #fff;border-top:1.5px solid #fff;border-right:1px solid #c6c2b0;border-bottom:1.6px solid #c6c2b0"></div>
<div style="left:29.3px;top:107.7px;width:17.4px;height:1.2px;background:#fff"></div>
<div style="left:29.3px;top:108.9px;width:17.4px;height:1.2px;background:#bdb9a6"></div>
<div style="left:29.3px;top:111.3px;width:17.4px;height:1.2px;background:#fff"></div>
<div style="left:29.3px;top:112.5px;width:17.4px;height:1.2px;background:#bdb9a6"></div>
<svg style="left:29.5px;top:118.7px;" width="16" height="16" viewBox="0 0 16 16" preserveAspectRatio="none"><ellipse cx="5.5" cy="8" rx="4.8" ry="4.6" fill="#8cb0e4" stroke="#3c64a8" stroke-width="1.3"/><ellipse cx="10.5" cy="8" rx="4.8" ry="4.6" fill="#8cb0e4" stroke="#3c64a8" stroke-width="1.3"/><path d="M8 4.2Q10.3 8 8 11.8Q5.7 8 8 4.2Z" fill="#8cb0e4" stroke="#3c64a8" stroke-width="1"/></svg>
<svg style="left:29.5px;top:140.4px;" width="16" height="16" viewBox="0 0 16 16" preserveAspectRatio="none"><ellipse cx="5.5" cy="8" rx="4.8" ry="4.6" fill="#8cb0e4" stroke="#3c64a8" stroke-width="1.3"/><ellipse cx="10.5" cy="8" rx="4.8" ry="4.6" fill="#eef2f8" stroke="#3c64a8" stroke-width="1.3"/><path d="M8 4.2Q10.3 8 8 11.8Q5.7 8 8 4.2Z" fill="#eef2f8" stroke="#3c64a8" stroke-width="1"/></svg>
<svg style="left:29.5px;top:162.1px;" width="16" height="16" viewBox="0 0 16 16" preserveAspectRatio="none"><ellipse cx="5.5" cy="8" rx="4.8" ry="4.6" fill="#eef2f8" stroke="#3c64a8" stroke-width="1.3"/><ellipse cx="10.5" cy="8" rx="4.8" ry="4.6" fill="#eef2f8" stroke="#3c64a8" stroke-width="1.3"/><path d="M8 4.2Q10.3 8 8 11.8Q5.7 8 8 4.2Z" fill="#6c98dc" stroke="#3c64a8" stroke-width="1"/></svg>
<div style="left:29.3px;top:181.4px;width:18.4px;height:1.2px;background:#c2beac"></div>
<div style="left:29.3px;top:182.6px;width:18.4px;height:1.2px;background:#fff"></div>
<svg style="left:29.5px;top:188.8px;" width="16" height="16" viewBox="0 0 16 16" preserveAspectRatio="none"><path d="M1.5 5H8.5V12H1.5Z" fill="#dce8fa" stroke="#1c2c5c" stroke-width="1.2"/><path d="M1.5 5L4.5 2.9000000000000004H11.5L8.5 5Z" fill="#a8c4ee" stroke="#1c2c5c" stroke-width="1.1"/><path d="M8.5 5L11.5 2.9000000000000004V9.9L8.5 12Z" fill="#5f8cd8" stroke="#1c2c5c" stroke-width="1.1"/><line x1="14" y1="13" x2="14" y2="3" stroke="#2c64c8" stroke-width="1.6"/><path d="M12 5L14 1L16 5Z" fill="#2c64c8" stroke="none" stroke-width="1.2"/></svg>
<svg style="left:29.5px;top:211.3px;" width="16" height="16" viewBox="0 0 16 16" preserveAspectRatio="none"><path d="M1.5 8H8.0V13H1.5Z" fill="#dce8fa" stroke="#1c2c5c" stroke-width="1.2"/><path d="M1.5 8L4.5 5.9H11.0L8.0 8Z" fill="#a8c4ee" stroke="#1c2c5c" stroke-width="1.1"/><path d="M8.0 8L11.0 5.9V10.9L8.0 13Z" fill="#5f8cd8" stroke="#1c2c5c" stroke-width="1.1"/><path d="M12.5 2V9M9.5 5.5H15.5" fill="none" stroke="#2c64c8" stroke-width="1.4"/><path d="M12.5 0.5L11 3H14ZM12.5 10.5L11 8H14Z" fill="#2c64c8" stroke="none" stroke-width="1.2"/></svg>
<svg style="left:29.5px;top:233.0px;" width="16" height="16" viewBox="0 0 16 16" preserveAspectRatio="none"><rect x="4.5" y="1.5" width="10" height="8" fill="#4a80d8" stroke="#1c3c7c" stroke-width="1.2"/><rect x="1.5" y="5" width="9.5" height="8.5" fill="#dce8fa" stroke="#1c2c5c" stroke-width="1.4"/></svg>
<svg style="left:29.5px;top:255.0px;" width="16" height="16" viewBox="0 0 16 16" preserveAspectRatio="none"><path d="M1.5 5H10.5V12H1.5Z" fill="#dce8fa" stroke="#1c2c5c" stroke-width="1.2"/><path d="M1.5 5L4.5 2.9000000000000004H13.5L10.5 5Z" fill="#c8dcf6" stroke="#1c2c5c" stroke-width="1.1"/><path d="M10.5 5L13.5 2.9000000000000004V9.9L10.5 12Z" fill="#5f8cd8" stroke="#1c2c5c" stroke-width="1.1"/><path d="M3 6.5L9 11M9 6.5L3 11" fill="none" stroke="#e02020" stroke-width="1.8"/></svg>
<svg style="left:29.5px;top:277.1px;" width="16" height="16" viewBox="0 0 16 16" preserveAspectRatio="none"><path d="M3 8H10V13.5H3Z" fill="#dce8fa" stroke="#1c2c5c" stroke-width="1.2"/><path d="M3 8L6 5.9H13L10 8Z" fill="#a8c4ee" stroke="#1c2c5c" stroke-width="1.1"/><path d="M10 8L13 5.9V11.4L10 13.5Z" fill="#5f8cd8" stroke="#1c2c5c" stroke-width="1.1"/><path d="M2.5 8Q0.5 2.5 8 2.5Q15 2.5 14.5 7" fill="none" stroke="#2c64c8" stroke-width="1.6"/><path d="M13 6L14.8 10L16 5.8Z" fill="#2c64c8" stroke="none" stroke-width="1.2"/></svg>
<svg style="left:29.5px;top:299.2px;" width="16" height="16" viewBox="0 0 16 16" preserveAspectRatio="none"><path d="M2 13V9L6 5H11L9 9V13Z" fill="#dce8fa" stroke="#1c2c5c" stroke-width="1.2"/><path d="M9 9L11 5L14 9V12L9 13Z" fill="#5f8cd8" stroke="#1c2c5c" stroke-width="1.1"/><path d="M11 2.5Q14 2 15 5" fill="none" stroke="#2c64c8" stroke-width="1.4"/></svg>
<svg style="left:29.5px;top:320.9px;" width="16" height="16" viewBox="0 0 16 16" preserveAspectRatio="none"><path d="M6 5H12V11H6Z" fill="#dce8fa" stroke="#1c2c5c" stroke-width="1.2"/><path d="M6 5L9 2.9000000000000004H15L12 5Z" fill="#a8c4ee" stroke="#1c2c5c" stroke-width="1.1"/><path d="M12 5L15 2.9000000000000004V8.9L12 11Z" fill="#5f8cd8" stroke="#1c2c5c" stroke-width="1.1"/><path d="M1 9H7V14H1Z" fill="#8cb0e8" stroke="#1c2c5c" stroke-width="1.2"/><path d="M1 9L3.5 7.25H9.5L7 9Z" fill="#a8c4ee" stroke="#1c2c5c" stroke-width="1.1"/><path d="M7 9L9.5 7.25V12.25L7 14Z" fill="#5f8cd8" stroke="#1c2c5c" stroke-width="1.1"/><path d="M2 6Q3 2.5 6.5 3" fill="none" stroke="#2c64c8" stroke-width="1.5"/></svg>
<svg style="left:29.5px;top:342.4px;" width="16" height="16" viewBox="0 0 16 16" preserveAspectRatio="none"><path d="M5 5H12V12H5Z" fill="#30a868" stroke="#1c2c5c" stroke-width="1.2"/><path d="M5 5L8 2.9000000000000004H15L12 5Z" fill="#a8c4ee" stroke="#1c2c5c" stroke-width="1.1"/><path d="M12 5L15 2.9000000000000004V9.9L12 12Z" fill="#5f8cd8" stroke="#1c2c5c" stroke-width="1.1"/><rect x="1" y="4" width="2.6" height="2.6" fill="#e02020" stroke="none" stroke-width="1"/><rect x="1" y="7.5" width="2.6" height="2.6" fill="#30a030" stroke="none" stroke-width="1"/><rect x="1" y="11" width="2.6" height="2.6" fill="#2050d0" stroke="none" stroke-width="1"/></svg>
<div style="left:29.3px;top:361.9px;width:18.4px;height:1.2px;background:#c2beac"></div>
<div style="left:29.3px;top:363.1px;width:18.4px;height:1.2px;background:#fff"></div>
<svg style="left:29.5px;top:370.8px;" width="16" height="16" viewBox="0 0 16 16" preserveAspectRatio="none"><path d="M4.5 6H12.0V13H4.5Z" fill="#6c9ce0" stroke="#1c2c5c" stroke-width="1.2"/><path d="M4.5 6L7.5 3.9000000000000004H15.0L12.0 6Z" fill="#a8c4ee" stroke="#1c2c5c" stroke-width="1.1"/><path d="M12.0 6L15.0 3.9000000000000004V10.9L12.0 13Z" fill="#5f8cd8" stroke="#1c2c5c" stroke-width="1.1"/><path d="M2 14V6L4.5 3" fill="none" stroke="#1c2c5c" stroke-width="1.4"/><path d="M3.5 1.5L7 2L4.5 4.5Z" fill="#2c64c8" stroke="none" stroke-width="1.2"/></svg>
<svg style="left:29.5px;top:392.5px;" width="16" height="16" viewBox="0 0 16 16" preserveAspectRatio="none"><path d="M5 5.5H12V12.5H5Z" fill="#eef2fa" stroke="#1c2c5c" stroke-width="1.2"/><path d="M5 5.5L8 3.4000000000000004H15L12 5.5Z" fill="#a8c4ee" stroke="#1c2c5c" stroke-width="1.1"/><path d="M12 5.5L15 3.4000000000000004V10.4L12 12.5Z" fill="#5f8cd8" stroke="#1c2c5c" stroke-width="1.1"/><path d="M12 5.5V12.5" fill="none" stroke="#e02020" stroke-width="2.2"/><rect x="1" y="4" width="2.6" height="2.6" fill="#e02020" stroke="none" stroke-width="1"/><rect x="1" y="7.5" width="2.6" height="2.6" fill="#30a030" stroke="none" stroke-width="1"/><rect x="1" y="11" width="2.6" height="2.6" fill="#2050d0" stroke="none" stroke-width="1"/></svg>
<div style="left:29.3px;top:412.4px;width:18.4px;height:1.2px;background:#c2beac"></div>
<div style="left:29.3px;top:413.6px;width:18.4px;height:1.2px;background:#fff"></div>
<svg style="left:29.5px;top:420.2px;" width="16" height="16" viewBox="0 0 16 16" preserveAspectRatio="none"><path d="M1 4L6 2.5L10 4V10L5 11.5L1 10Z" fill="#dce6f6" stroke="#b0bcd8" stroke-width="1"/><path d="M8 5H13V8H11V11H8Z" fill="#eef2fa" stroke="#d02020" stroke-width="1.8"/><path d="M11 12H15M13 10V14" fill="none" stroke="#2c64c8" stroke-width="1.6"/></svg>
<svg style="left:29.5px;top:442.4px;" width="16" height="16" viewBox="0 0 16 16" preserveAspectRatio="none"><path d="M1 12L4 6L9 5V12Z" fill="#8cb0e4" stroke="#3c64a8" stroke-width="1"/><path d="M6 13L10.5 2.5L15 13Z" fill="#f0a828" stroke="#a86c10" stroke-width="1"/><path d="M8 9H13M7 11.5H14" fill="none" stroke="#fbe080" stroke-width="1"/></svg>
<svg style="left:29.5px;top:464.3px;" width="16" height="16" viewBox="0 0 16 16" preserveAspectRatio="none"><path d="M1 5.5H5V12.5H1Z" fill="#dce8fa" stroke="#1c2c5c" stroke-width="1.2"/><path d="M1 5.5L3 4.1H7L5 5.5Z" fill="#a8c4ee" stroke="#1c2c5c" stroke-width="1.1"/><path d="M5 5.5L7 4.1V11.1L5 12.5Z" fill="#5f8cd8" stroke="#1c2c5c" stroke-width="1.1"/><path d="M9.5 5.5H13.5V12.5H9.5Z" fill="#dce8fa" stroke="#1c2c5c" stroke-width="1.2"/><path d="M9.5 5.5L11.5 4.1H15.5L13.5 5.5Z" fill="#a8c4ee" stroke="#1c2c5c" stroke-width="1.1"/><path d="M13.5 5.5L15.5 4.1V11.1L13.5 12.5Z" fill="#5f8cd8" stroke="#1c2c5c" stroke-width="1.1"/><line x1="8" y1="2" x2="8" y2="15" stroke="#1c2c5c" stroke-width="1.2"/></svg>
<svg style="left:29.5px;top:486.2px;" width="16" height="16" viewBox="0 0 16 16" preserveAspectRatio="none"><path d="M1 5H11V13.5H1Z" fill="#6c98d8" stroke="#1c2c5c" stroke-width="1.2"/><path d="M1 5L5 2.2H15L11 5Z" fill="#8cb0e4" stroke="#1c2c5c" stroke-width="1.1"/><path d="M11 5L15 2.2V10.7L11 13.5Z" fill="#5f8cd8" stroke="#1c2c5c" stroke-width="1.1"/><rect x="3" y="7" width="6" height="4.5" fill="#b8d0f2" stroke="#1c2c5c" stroke-width="1"/><rect x="5" y="8.5" width="2" height="1.5" fill="#f0e060" stroke="none" stroke-width="1"/></svg>
<svg style="left:29.5px;top:507.3px;" width="16" height="16" viewBox="0 0 16 16" preserveAspectRatio="none"><path d="M6 4H13V10H6Z" fill="#dce8fa" stroke="#1c2c5c" stroke-width="1.2"/><path d="M6 4L9 1.9000000000000004H16L13 4Z" fill="#a8c4ee" stroke="#1c2c5c" stroke-width="1.1"/><path d="M13 4L16 1.9000000000000004V7.9L13 10Z" fill="#5f8cd8" stroke="#1c2c5c" stroke-width="1.1"/><path d="M1 10L4 13.5L9.5 9" fill="none" stroke="#189838" stroke-width="2.4"/></svg>
<div style="left:52.4px;top:104.6px;width:23.6px;height:438.0px;background:#edebde;border-left:1px solid #fff;border-top:1.5px solid #fff;border-right:1px solid #c6c2b0;border-bottom:1.6px solid #c6c2b0"></div>
<div style="left:55.4px;top:107.7px;width:16.6px;height:1.2px;background:#fff"></div>
<div style="left:55.4px;top:108.9px;width:16.6px;height:1.2px;background:#bdb9a6"></div>
<div style="left:55.4px;top:111.3px;width:16.6px;height:1.2px;background:#fff"></div>
<div style="left:55.4px;top:112.5px;width:16.6px;height:1.2px;background:#bdb9a6"></div>
<svg style="left:56.3px;top:118.0px;" width="16" height="16" viewBox="0 0 16 16" preserveAspectRatio="none"><line x1="1.5" y1="2" x2="1.5" y2="14" stroke="#1a1a1a" stroke-width="1.6"/><line x1="14.5" y1="2" x2="14.5" y2="14" stroke="#1a1a1a" stroke-width="1.6"/><line x1="1.5" y1="6" x2="14.5" y2="6" stroke="#1a1a1a" stroke-width="1.6"/><path d="M2 6L5 4.4V7.6ZM14 6L11 4.4V7.6Z" fill="#1a1a1a" stroke="none" stroke-width="1.2"/></svg>
<svg style="left:56.3px;top:139.8px;" width="16" height="16" viewBox="0 0 16 16" preserveAspectRatio="none"><line x1="2" y1="5" x2="14" y2="12" stroke="#1a1a1a" stroke-width="1.6"/><line x1="4" y1="1.5" x2="0.5" y2="8" stroke="#1a1a1a" stroke-width="1.6"/><line x1="15.5" y1="8.5" x2="12" y2="15" stroke="#1a1a1a" stroke-width="1.6"/></svg>
<svg style="left:56.3px;top:161.9px;" width="16" height="16" viewBox="0 0 16 16" preserveAspectRatio="none"><path d="M2 14Q2.5 4 14 3" fill="none" stroke="#1a1a1a" stroke-width="1.6"/><path d="M6 14Q6.5 8 14 7" fill="none" stroke="#8a8e9a" stroke-width="1.6"/><rect x="0.3999999999999999" y="12.4" width="3.2" height="3.2" fill="#2c64c8"/><rect x="12.4" y="1.4" width="3.2" height="3.2" fill="#2c64c8"/></svg>
<svg style="left:56.3px;top:183.6px;" width="16" height="16" viewBox="0 0 16 16" preserveAspectRatio="none"><path d="M1.5 4V13M5 2V11M9 6V11H14M5 6L9 8" fill="none" stroke="#1a1a1a" stroke-width="1.4"/><rect x="0.30000000000000004" y="1.3" width="2.4" height="2.4" fill="#2c64c8"/><rect x="0.30000000000000004" y="12.8" width="2.4" height="2.4" fill="#2c64c8"/><rect x="13.3" y="1.8" width="2.4" height="2.4" fill="#2c64c8"/><rect x="13.3" y="6.8" width="2.4" height="2.4" fill="#2c64c8"/><path d="M12 1.5L14.5 0M3 8H6" fill="none" stroke="#2c64c8" stroke-width="1"/></svg>
<div style="left:55.4px;top:203.3px;width:17.6px;height:1.2px;background:#c2beac"></div>
<div style="left:55.4px;top:204.5px;width:17.6px;height:1.2px;background:#fff"></div>
<svg style="left:56.3px;top:210.9px;" width="16" height="16" viewBox="0 0 16 16" preserveAspectRatio="none"><ellipse cx="8" cy="8" rx="6.5" ry="5.6" fill="#f4f6fa" stroke="#1a1a1a" stroke-width="1.4"/><line x1="8" y1="8" x2="3.5" y2="4" stroke="#1a1a1a" stroke-width="1.3"/><path d="M3 3.5L6.2 4.6L4.4 6.6Z" fill="#1a1a1a" stroke="none" stroke-width="1.2"/></svg>
<svg style="left:56.3px;top:232.8px;" width="16" height="16" viewBox="0 0 16 16" preserveAspectRatio="none"><path d="M2 6Q8 0 14 5" fill="none" stroke="#1a1a1a" stroke-width="1.4"/><path d="M12.5 4L7 8H10.5L5 13" fill="none" stroke="#1a1a1a" stroke-width="1.5"/><path d="M12.8 3.8L9.5 4.6L11 6.6Z" fill="#1a1a1a" stroke="none" stroke-width="1.2"/><path d="M14 7Q14 11 11 13" fill="none" stroke="#1a1a1a" stroke-width="1.2"/></svg>
<svg style="left:56.3px;top:254.7px;" width="16" height="16" viewBox="0 0 16 16" preserveAspectRatio="none"><ellipse cx="8" cy="8" rx="6.5" ry="5.6" fill="#f4f6fa" stroke="#1a1a1a" stroke-width="1.4"/><line x1="3.2" y1="4.2" x2="12.8" y2="11.8" stroke="#1a1a1a" stroke-width="1.3"/><path d="M3 4L6.2 4.8L4.6 6.8ZM13 12L9.8 11.2L11.4 9.2Z" fill="#1a1a1a" stroke="none" stroke-width="1.2"/></svg>
<svg style="left:56.3px;top:276.5px;" width="16" height="16" viewBox="0 0 16 16" preserveAspectRatio="none"><path d="M1.5 13.5H14.5M1.5 13.5L9.5 3" fill="none" stroke="#1a1a1a" stroke-width="1.5"/><path d="M9.5 3Q13 7 13.5 11" fill="none" stroke="#1a1a1a" stroke-width="1.2"/><path d="M14 12.5L12 9.5L15 9.8Z" fill="#1a1a1a" stroke="none" stroke-width="1.2"/></svg>
<div style="left:55.4px;top:297.2px;width:17.6px;height:1.2px;background:#c2beac"></div>
<div style="left:55.4px;top:298.4px;width:17.6px;height:1.2px;background:#fff"></div>
<svg style="left:56.3px;top:305.0px;" width="16" height="16" viewBox="0 0 16 16" preserveAspectRatio="none"><line x1="1.5" y1="2" x2="1.5" y2="14" stroke="#1a1a1a" stroke-width="1.5"/><line x1="14.5" y1="2" x2="14.5" y2="14" stroke="#1a1a1a" stroke-width="1.5"/><line x1="1.5" y1="12.5" x2="14.5" y2="12.5" stroke="#1a1a1a" stroke-width="1.3"/><path d="M3 3H10L7 7L13.5 12L5.5 8.5L8 6Z" fill="#f0d820" stroke="#807010" stroke-width="0.8"/></svg>
<svg style="left:56.3px;top:326.8px;" width="16" height="16" viewBox="0 0 16 16" preserveAspectRatio="none"><line x1="1.5" y1="2" x2="1.5" y2="14" stroke="#1a1a1a" stroke-width="1.5"/><line x1="9" y1="2" x2="9" y2="9" stroke="#1a1a1a" stroke-width="1.5"/><line x1="14.5" y1="2" x2="14.5" y2="14" stroke="#1a1a1a" stroke-width="1.5"/><line x1="1.5" y1="5" x2="9" y2="5" stroke="#1a1a1a" stroke-width="1.4"/><line x1="1.5" y1="11.5" x2="14.5" y2="11.5" stroke="#1a1a1a" stroke-width="1.4"/></svg>
<svg style="left:56.3px;top:348.4px;" width="16" height="16" viewBox="0 0 16 16" preserveAspectRatio="none"><line x1="1.5" y1="2" x2="1.5" y2="14" stroke="#1a1a1a" stroke-width="1.5"/><line x1="6" y1="2" x2="6" y2="14" stroke="#1a1a1a" stroke-width="1.5"/><line x1="10.5" y1="2" x2="10.5" y2="14" stroke="#1a1a1a" stroke-width="1.5"/><line x1="14.5" y1="2" x2="14.5" y2="14" stroke="#1a1a1a" stroke-width="1.5"/><line x1="1.5" y1="7" x2="14.5" y2="7" stroke="#1a1a1a" stroke-width="1.4"/></svg>
<div style="left:55.4px;top:368.8px;width:17.6px;height:1.2px;background:#c2beac"></div>
<div style="left:55.4px;top:370.0px;width:17.6px;height:1.2px;background:#fff"></div>
<svg style="left:56.3px;top:377.2px;" width="16" height="16" viewBox="0 0 16 16" preserveAspectRatio="none"><path d="M1 5L4.5 7.5L4 4.2Z" fill="#1a1a1a" stroke="none" stroke-width="1.2"/><path d="M3 6L8 4.5H13" fill="none" stroke="#1a1a1a" stroke-width="1.3"/><path d="M7 6L12 13.5L14.5 10.5L9.5 5Z" fill="#f0d820" stroke="#706010" stroke-width="0.8"/><path d="M12.5 3.5Q14.5 2 15.5 4.5" fill="none" stroke="#2c64c8" stroke-width="1.5"/></svg>
<svg style="left:56.3px;top:399.0px;" width="16" height="16" viewBox="0 0 16 16" preserveAspectRatio="none"><rect x="1" y="3" width="14" height="10" fill="#dce8fa" stroke="#2c4ca4" stroke-width="1.6"/><line x1="6" y1="3" x2="6" y2="13" stroke="#2c4ca4" stroke-width="1.4"/><line x1="10.5" y1="3" x2="10.5" y2="13" stroke="#2c4ca4" stroke-width="1.4"/><ellipse cx="3.5" cy="8" rx="1.5" ry="2" fill="none" stroke="#2c4ca4" stroke-width="1"/><rect x="7" y="5.5" width="2.5" height="5" fill="#2c4ca4" stroke="none" stroke-width="1"/><rect x="11.5" y="5.5" width="2" height="5" fill="#7090d0" stroke="none" stroke-width="1"/></svg>
<svg style="left:56.3px;top:420.5px;" width="16" height="16" viewBox="0 0 16 16" preserveAspectRatio="none"><ellipse cx="8" cy="8" rx="6.8" ry="5.4" fill="#f8f8f8" stroke="#1a1a1a" stroke-width="1.3"/><path d="M5.5 8H10.5M8 5.5V10.5" fill="none" stroke="#1a1a1a" stroke-width="1.8"/></svg>
<div style="left:55.4px;top:441.8px;width:17.6px;height:1.2px;background:#c2beac"></div>
<div style="left:55.4px;top:443.0px;width:17.6px;height:1.2px;background:#fff"></div>
<svg style="left:56.3px;top:449.3px;" width="16" height="16" viewBox="0 0 16 16" preserveAspectRatio="none"><line x1="1.5" y1="9.5" x2="1.5" y2="15" stroke="#1a1a1a" stroke-width="1.5"/><line x1="14.5" y1="9.5" x2="14.5" y2="15" stroke="#1a1a1a" stroke-width="1.5"/><line x1="1.5" y1="12.5" x2="14.5" y2="12.5" stroke="#1a1a1a" stroke-width="1.5"/><text x="8" y="9.5" font-family="Liberation Sans, sans-serif" font-weight="bold" font-size="11.5" fill="#2c54b4" text-anchor="middle">A</text></svg>
<svg style="left:56.3px;top:471.2px;" width="16" height="16" viewBox="0 0 16 16" preserveAspectRatio="none"><line x1="1.5" y1="9.5" x2="1.5" y2="15" stroke="#1a1a1a" stroke-width="1.5"/><line x1="14.5" y1="9.5" x2="14.5" y2="15" stroke="#1a1a1a" stroke-width="1.5"/><line x1="1.5" y1="12.5" x2="14.5" y2="12.5" stroke="#1a1a1a" stroke-width="1.5"/><line x1="5" y1="10" x2="11" y2="4" stroke="#f0c020" stroke-width="2.6"/><line x1="11" y1="4" x2="13.5" y2="1.5" stroke="#e04040" stroke-width="2.4"/><line x1="4" y1="11" x2="5.5" y2="9.5" stroke="#1a1a1a" stroke-width="1.5"/></svg>
<svg style="left:56.3px;top:493.1px;" width="16" height="16" viewBox="0 0 16 16" preserveAspectRatio="none"><line x1="1.5" y1="2" x2="1.5" y2="14.5" stroke="#1a1a1a" stroke-width="1.5"/><line x1="14.5" y1="2" x2="14.5" y2="14.5" stroke="#1a1a1a" stroke-width="1.5"/><line x1="1.5" y1="5" x2="14.5" y2="5" stroke="#2c64c8" stroke-width="1.6"/><line x1="1.5" y1="11" x2="14.5" y2="11" stroke="#1a1a1a" stroke-width="1.4"/><line x1="11" y1="2" x2="11" y2="14.5" stroke="#2c64c8" stroke-width="1.4"/><rect x="5" y="3" width="4" height="4" fill="#a8c4f0" stroke="none" stroke-width="1"/></svg>
<div style="left:55.4px;top:512.2px;width:17.6px;height:1.2px;background:#c2beac"></div>
<div style="left:55.4px;top:513.4px;width:17.6px;height:1.2px;background:#fff"></div>
<svg style="left:56.3px;top:521.2px;" width="16" height="16" viewBox="0 0 16 16" preserveAspectRatio="none"><line x1="1" y1="12.5" x2="15" y2="12.5" stroke="#1a1a1a" stroke-width="1.6"/><line x1="1.5" y1="10" x2="1.5" y2="15" stroke="#1a1a1a" stroke-width="1.5"/><line x1="14.5" y1="10" x2="14.5" y2="15" stroke="#1a1a1a" stroke-width="1.5"/><line x1="4.5" y1="11.5" x2="10" y2="6.5" stroke="#1a1a1a" stroke-width="2.6"/><line x1="10" y1="6.5" x2="14" y2="3" stroke="#e87828" stroke-width="2.2"/></svg>
<div style="left:972.8px;top:105.2px;width:23.6px;height:420.5px;background:#edebde;border-left:1px solid #fff;border-top:1.5px solid #fff;border-right:1px solid #c6c2b0;border-bottom:1.6px solid #c6c2b0"></div>
<div style="left:975.8px;top:108.3px;width:16.6px;height:1.2px;background:#fff"></div>
<div style="left:975.8px;top:109.5px;width:16.6px;height:1.2px;background:#bdb9a6"></div>
<div style="left:975.8px;top:111.9px;width:16.6px;height:1.2px;background:#fff"></div>
<div style="left:975.8px;top:113.1px;width:16.6px;height:1.2px;background:#bdb9a6"></div>
<svg style="left:976.0px;top:121.6px;" width="16" height="16" viewBox="0 0 16 16" preserveAspectRatio="none"><line x1="2" y1="8" x2="12" y2="8" stroke="#555" stroke-width="1.3"/><rect x="1" y="6.3" width="5" height="3.4" fill="#3c7ce0" stroke="none" stroke-width="1"/><ellipse cx="13" cy="8" rx="2.8000000000000003" ry="2.2" fill="#fff" stroke="#3c7ce0" stroke-width="1.4"/></svg>
<svg style="left:976.0px;top:143.3px;" width="16" height="16" viewBox="0 0 16 16" preserveAspectRatio="none"><path d="M3 13V6.5H12" fill="none" stroke="#555" stroke-width="1.4"/><rect x="1" y="11.5" width="4" height="3.4" fill="#3c7ce0" stroke="none" stroke-width="1"/><rect x="2" y="5" width="2" height="3" fill="#555" stroke="none" stroke-width="1"/><ellipse cx="13" cy="6.5" rx="2.8000000000000003" ry="2.2" fill="#fff" stroke="#3c7ce0" stroke-width="1.4"/></svg>
<div style="left:975.8px;top:163.5px;width:17.6px;height:1.2px;background:#c2beac"></div>
<div style="left:975.8px;top:164.7px;width:17.6px;height:1.2px;background:#fff"></div>
<svg style="left:976.0px;top:170.9px;" width="16" height="16" viewBox="0 0 16 16" preserveAspectRatio="none"><line x1="3" y1="13" x2="13" y2="4" stroke="#222" stroke-width="1.4"/><ellipse cx="13" cy="3.8" rx="2.8000000000000003" ry="2.2" fill="#fff" stroke="#3c7ce0" stroke-width="1.4"/><ellipse cx="3" cy="13" rx="2.6" ry="2.2" fill="#a8c8f4" stroke="#3c7ce0" stroke-width="1.2"/></svg>
<svg style="left:976.0px;top:192.6px;" width="16" height="16" viewBox="0 0 16 16" preserveAspectRatio="none"><line x1="1.5" y1="13.5" x2="14.5" y2="2.5" stroke="#222" stroke-width="1.4"/><ellipse cx="8" cy="8" rx="2.8" ry="2.3" fill="#a8c8f4" stroke="#3c7ce0" stroke-width="1.3"/></svg>
<svg style="left:976.0px;top:214.7px;" width="16" height="16" viewBox="0 0 16 16" preserveAspectRatio="none"><line x1="1.5" y1="3" x2="14.5" y2="13" stroke="#222" stroke-width="1.5"/><line x1="1.5" y1="13" x2="14.5" y2="3" stroke="#222" stroke-width="1.5"/><rect x="6.2" y="6.2" width="3.6" height="3.6" fill="#a8c8f4" stroke="#3c7ce0" stroke-width="1.2"/></svg>
<svg style="left:976.0px;top:236.8px;" width="16" height="16" viewBox="0 0 16 16" preserveAspectRatio="none"><line x1="1.5" y1="3" x2="14.5" y2="13" stroke="#222" stroke-width="1.5"/><path d="M1.5 13L6 9.5M10 6.5L14.5 3" fill="none" stroke="#222" stroke-width="1.5"/><rect x="6.2" y="6.2" width="3.6" height="3.6" fill="#a8c8f4" stroke="#3c7ce0" stroke-width="1.2"/></svg>
<svg style="left:976.0px;top:258.5px;" width="16" height="16" viewBox="0 0 16 16" preserveAspectRatio="none"><line x1="1.5" y1="8" x2="8" y2="8" stroke="#444" stroke-width="1.6"/><path d="M9 8H15" fill="none" stroke="#444" stroke-width="1.6" stroke-dasharray="1.4 1.2"/></svg>
<div style="left:975.8px;top:278.7px;width:17.6px;height:1.2px;background:#c2beac"></div>
<div style="left:975.8px;top:279.9px;width:17.6px;height:1.2px;background:#fff"></div>
<svg style="left:976.0px;top:286.9px;" width="16" height="16" viewBox="0 0 16 16" preserveAspectRatio="none"><ellipse cx="8" cy="8" rx="6.5" ry="5.4" fill="#f8f8f8" stroke="#222" stroke-width="1.5"/><ellipse cx="8" cy="8" rx="2.6" ry="2.2" fill="#a8c8f4" stroke="#3c7ce0" stroke-width="1.2"/></svg>
<svg style="left:976.0px;top:308.8px;" width="16" height="16" viewBox="0 0 16 16" preserveAspectRatio="none"><path d="M8 2.5L14.5 8L8 13.5L1.5 8Z" fill="#e4eefc" stroke="#3c7ce0" stroke-width="1.3"/><ellipse cx="8" cy="8" rx="4.4" ry="3.8" fill="#f4f8ff" stroke="#8aa8dc" stroke-width="1"/><rect x="6.8" y="1.5999999999999999" width="2.4" height="2.4" fill="#3c7ce0"/><rect x="6.8" y="12.0" width="2.4" height="2.4" fill="#3c7ce0"/><rect x="0.8" y="6.8" width="2.4" height="2.4" fill="#3c7ce0"/><rect x="12.8" y="6.8" width="2.4" height="2.4" fill="#3c7ce0"/></svg>
<svg style="left:976.0px;top:330.5px;" width="16" height="16" viewBox="0 0 16 16" preserveAspectRatio="none"><ellipse cx="9" cy="9" rx="5.5" ry="4.6" fill="#f4f8ff" stroke="#222" stroke-width="1.5"/><path d="M1 7L9 4.4" fill="none" stroke="#222" stroke-width="1.3"/><ellipse cx="4.5" cy="5.5" rx="2" ry="1.7" fill="#a8c8f4" stroke="#3c7ce0" stroke-width="1.1"/></svg>
<div style="left:975.8px;top:350.7px;width:17.6px;height:1.2px;background:#c2beac"></div>
<div style="left:975.8px;top:351.9px;width:17.6px;height:1.2px;background:#fff"></div>
<svg style="left:976.0px;top:358.3px;" width="16" height="16" viewBox="0 0 16 16" preserveAspectRatio="none"><line x1="1" y1="11" x2="15" y2="11" stroke="#222" stroke-width="1.6"/><line x1="8" y1="2.5" x2="8" y2="11" stroke="#222" stroke-width="1.6"/><ellipse cx="8" cy="11.5" rx="2.6" ry="2.1" fill="#a8c8f4" stroke="#3c7ce0" stroke-width="1.2"/></svg>
<svg style="left:976.0px;top:380.4px;" width="16" height="16" viewBox="0 0 16 16" preserveAspectRatio="none"><line x1="1.5" y1="11" x2="13" y2="3" stroke="#222" stroke-width="1.5"/><line x1="3" y1="14" x2="14.5" y2="6" stroke="#222" stroke-width="1.5"/></svg>
<svg style="left:976.0px;top:402.3px;" width="16" height="16" viewBox="0 0 16 16" preserveAspectRatio="none"><rect x="3" y="3" width="7" height="4.5" fill="#f0dc50" stroke="#807020" stroke-width="1"/><rect x="7" y="7.5" width="7" height="4.5" fill="#f0dc50" stroke="#807020" stroke-width="1"/><ellipse cx="3" cy="9" rx="2.6" ry="2.1" fill="#a8c8f4" stroke="#3c7ce0" stroke-width="1.2"/></svg>
<svg style="left:976.0px;top:424.4px;" width="16" height="16" viewBox="0 0 16 16" preserveAspectRatio="none"><ellipse cx="8" cy="8.5" rx="2.6" ry="2" fill="#dce8fc" stroke="#3c7ce0" stroke-width="1.4"/></svg>
<div style="left:975.8px;top:445.2px;width:17.6px;height:1.2px;background:#c2beac"></div>
<div style="left:975.8px;top:446.4px;width:17.6px;height:1.2px;background:#fff"></div>
<svg style="left:976.0px;top:452.8px;" width="16" height="16" viewBox="0 0 16 16" preserveAspectRatio="none"><line x1="1.5" y1="13" x2="11" y2="5" stroke="#222" stroke-width="1.5"/><path d="M7 5Q10 2.5 11.5 5.5Q14 5 14 8Q12 10 9.5 8.5" fill="#a8c8f4" stroke="#3c7ce0" stroke-width="1.1"/></svg>
<svg style="left:976.0px;top:474.7px;" width="16" height="16" viewBox="0 0 16 16" preserveAspectRatio="none"><path d="M2 11Q3 5 8 5Q11 5 11 10" fill="none" stroke="#555" stroke-width="2.4"/><line x1="2" y1="13.5" x2="14.5" y2="3.5" stroke="#e02020" stroke-width="1.8"/><rect x="11" y="10.5" width="4" height="3" fill="#dce8fc" stroke="#444" stroke-width="1"/></svg>
<div style="left:975.8px;top:494.7px;width:17.6px;height:1.2px;background:#c2beac"></div>
<div style="left:975.8px;top:495.9px;width:17.6px;height:1.2px;background:#fff"></div>
<svg style="left:976.0px;top:502.3px;" width="16" height="16" viewBox="0 0 16 16" preserveAspectRatio="none"><path d="M2.5 14V7.5Q2.5 2.5 7 2.5Q11.5 2.5 11.5 7.5V14H8.5V8Q8.5 5.5 7 5.5Q5.5 5.5 5.5 8V14Z" fill="#c02030" stroke="#801018" stroke-width="0.8"/><rect x="11.5" y="11" width="4" height="3.4" fill="#3c7ce0" stroke="#1c3c8c" stroke-width="0.8"/></svg>
<div style="left:998.9px;top:103.7px;width:25.7px;height:387.8px;background:#edebde;border-left:1px solid #fff;border-top:1.5px solid #fff;border-right:1px solid #c6c2b0;border-bottom:1.6px solid #c6c2b0"></div>
<div style="left:1001.9px;top:106.8px;width:18.7px;height:1.2px;background:#fff"></div>
<div style="left:1001.9px;top:108.0px;width:18.7px;height:1.2px;background:#bdb9a6"></div>
<div style="left:1001.9px;top:110.4px;width:18.7px;height:1.2px;background:#fff"></div>
<div style="left:1001.9px;top:111.6px;width:18.7px;height:1.2px;background:#bdb9a6"></div>
<svg style="left:1002.5px;top:118.0px;" width="16" height="16" viewBox="0 0 16 16" preserveAspectRatio="none"><path d="M3 10.5L11 2.5L15 5L7 13Z" fill="#f0a060" stroke="#a05820" stroke-width="0.8"/><path d="M3 10.5L6 8L10 10.5L7 13Z" fill="#e04060" stroke="none" stroke-width="1.2"/><path d="M5.5 8.5L8.5 5.5L12.5 8L9.5 11Z" fill="#a8c8f4" stroke="none" stroke-width="1.2"/><line x1="0.5" y1="13.8" x2="13" y2="13.8" stroke="#333" stroke-width="1.3"/></svg>
<svg style="left:1002.5px;top:140.0px;" width="16" height="16" viewBox="0 0 16 16" preserveAspectRatio="none"><ellipse cx="4.5" cy="4.5" rx="3.4" ry="2.6" fill="#dce8fc" stroke="#222" stroke-width="1.4"/><ellipse cx="10" cy="5.5" rx="3" ry="2.3" fill="#dce8fc" stroke="#222" stroke-width="1.3"/><ellipse cx="8" cy="11.5" rx="3.4" ry="2.6" fill="#dce8fc" stroke="#222" stroke-width="1.4"/><ellipse cx="12.5" cy="11" rx="2.6" ry="2.2" fill="#dce8fc" stroke="#222" stroke-width="1.3"/><path d="M8 3Q11 0.5 13.5 4" fill="none" stroke="#2c64c8" stroke-width="1.6"/><path d="M14.5 6L11.8 4.5L15 2.8Z" fill="#2c64c8" stroke="none" stroke-width="1.2"/></svg>
<svg style="left:1002.5px;top:162.0px;" width="16" height="16" viewBox="0 0 16 16" preserveAspectRatio="none"><path d="M6.5 3V13H1Z" fill="#dce8fc" stroke="#222" stroke-width="1.4"/><path d="M9.5 3V13H15Z" fill="#dce8fc" stroke="#222" stroke-width="1.4"/><line x1="8" y1="0.5" x2="8" y2="15.5" stroke="#3c7ce0" stroke-width="1.8"/></svg>
<svg style="left:1002.5px;top:184.0px;" width="16" height="16" viewBox="0 0 16 16" preserveAspectRatio="none"><path d="M1 12Q1 4 8 4Q15 4 15 12" fill="#cfe0f8" stroke="#222" stroke-width="1.4"/><path d="M5.5 12Q5.5 7.5 8 7.5Q10.5 7.5 10.5 12" fill="#f4f8ff" stroke="#2c64c8" stroke-width="1.3"/><line x1="0.5" y1="12.5" x2="15.5" y2="12.5" stroke="#7ca0dc" stroke-width="1.6"/><line x1="8" y1="4.5" x2="8" y2="7" stroke="#2c64c8" stroke-width="1.2"/></svg>
<svg style="left:1002.5px;top:206.0px;" width="16" height="16" viewBox="0 0 16 16" preserveAspectRatio="none"><rect x="1.2" y="1.5" width="5.8" height="5" fill="#f4f8ff" stroke="#222" stroke-width="1.3"/><rect x="1.2" y="9.5" width="5.8" height="5" fill="#f4f8ff" stroke="#222" stroke-width="1.3"/><rect x="9" y="1.5" width="5.8" height="5" fill="#f4f8ff" stroke="#222" stroke-width="1.3"/><rect x="9" y="9.5" width="5.8" height="5" fill="#f4f8ff" stroke="#222" stroke-width="1.3"/><rect x="2.4" y="4.1" width="3.4" height="1.4" fill="#a8c4f0" stroke="none" stroke-width="1"/><rect x="2.4" y="12.1" width="3.4" height="1.4" fill="#a8c4f0" stroke="none" stroke-width="1"/><rect x="10.2" y="4.1" width="3.4" height="1.4" fill="#a8c4f0" stroke="none" stroke-width="1"/><rect x="10.2" y="12.1" width="3.4" height="1.4" fill="#a8c4f0" stroke="none" stroke-width="1"/></svg>
<svg style="left:1002.5px;top:228.0px;" width="16" height="16" viewBox="0 0 16 16" preserveAspectRatio="none"><path d="M8 1.5V14.5M1 8H15" fill="none" stroke="#2c64c8" stroke-width="2"/><path d="M8 0L5.5 3.5H10.5ZM8 16L5.5 12.5H10.5ZM0 8L3.5 5.8V10.2ZM16 8L12.5 5.8V10.2Z" fill="#2c64c8" stroke="none" stroke-width="1.2"/></svg>
<svg style="left:1002.5px;top:250.0px;" width="16" height="16" viewBox="0 0 16 16" preserveAspectRatio="none"><path d="M5 4.5Q1.5 7 3 10.5Q5.5 14.5 10.5 13Q14.5 11 13.5 7Q12.5 4 9 3.5" fill="none" stroke="#2c64c8" stroke-width="2.3"/><path d="M3.5 2.5L9 1.5L7.5 7Z" fill="#2c64c8" stroke="none" stroke-width="1.2"/></svg>
<svg style="left:1002.5px;top:272.0px;" width="16" height="16" viewBox="0 0 16 16" preserveAspectRatio="none"><rect x="1" y="1.5" width="14" height="13" fill="#dce8f8" stroke="#7f9ed4" stroke-width="1.3"/><rect x="1.5" y="7.5" width="7.5" height="6.5" fill="#f6f8fc" stroke="#6a7ca8" stroke-width="1.2"/><path d="M3.2 13V10.5M5.2 13V10.5M7 13V10.5" fill="none" stroke="#8090b0" stroke-width="0.9"/></svg>
<svg style="left:1002.5px;top:294.0px;" width="16" height="16" viewBox="0 0 16 16" preserveAspectRatio="none"><rect x="1.5" y="2" width="5.8" height="12" fill="#fff" stroke="#222" stroke-width="1.5"/><path d="M8.8 2V14H15.2Z" fill="#cfe0f8" stroke="#3058a8" stroke-width="1.4"/></svg>
<svg style="left:1002.5px;top:316.0px;" width="16" height="16" viewBox="0 0 16 16" preserveAspectRatio="none"><path d="M0.5 9.5H6.5" fill="none" stroke="#444" stroke-width="1.7"/><path d="M9.5 9.5H15.5" fill="none" stroke="#3c7ce0" stroke-width="1.5" stroke-dasharray="1.6 1.2"/><line x1="5" y1="13.5" x2="12" y2="2.5" stroke="#3c7ce0" stroke-width="1.8"/></svg>
<svg style="left:1002.5px;top:338.0px;" width="16" height="16" viewBox="0 0 16 16" preserveAspectRatio="none"><path d="M0.5 9.5H5" fill="none" stroke="#444" stroke-width="1.7"/><path d="M5.5 9.5H10" fill="none" stroke="#3c7ce0" stroke-width="1.5" stroke-dasharray="1.6 1.2"/><line x1="9.5" y1="13.5" x2="15" y2="3" stroke="#3c7ce0" stroke-width="1.8"/><path d="M7 11L10 9.5L7.5 8Z" fill="#3c7ce0" stroke="none" stroke-width="1.2"/></svg>
<svg style="left:1002.5px;top:360.0px;" width="16" height="16" viewBox="0 0 16 16" preserveAspectRatio="none"><rect x="1.5" y="6" width="13" height="7.5" fill="#dce8fc" stroke="#222" stroke-width="1.7"/><rect x="8.0" y="4.0" width="3" height="3" fill="#3c7ce0"/><path d="M5 3Q9 1 12 4" fill="none" stroke="#3c7ce0" stroke-width="1.2"/></svg>
<svg style="left:1002.5px;top:382.0px;" width="16" height="16" viewBox="0 0 16 16" preserveAspectRatio="none"><path d="M5 5.5H1.5V13.5H14.5V5.5H11" fill="#dce8fc" stroke="#222" stroke-width="1.7"/><rect x="3.6" y="4.1" width="2.8" height="2.8" fill="#3c7ce0"/><rect x="9.6" y="4.1" width="2.8" height="2.8" fill="#3c7ce0"/></svg>
<svg style="left:1002.5px;top:404.0px;" width="16" height="16" viewBox="0 0 16 16" preserveAspectRatio="none"><line x1="0.5" y1="8" x2="5" y2="8" stroke="#222" stroke-width="1.6"/><line x1="11" y1="8" x2="15.5" y2="8" stroke="#222" stroke-width="1.6"/><path d="M8 8L3.5 5V11ZM8 8L12.5 5V11Z" fill="#1c3c8c" stroke="none" stroke-width="1.2"/><line x1="5" y1="8" x2="11" y2="8" stroke="#2c64c8" stroke-width="1.4"/></svg>
<svg style="left:1002.5px;top:426.0px;" width="16" height="16" viewBox="0 0 16 16" preserveAspectRatio="none"><path d="M2 15V7L8 2H15" fill="none" stroke="#222" stroke-width="1.7"/><path d="M2 7Q3 3 8 2" fill="none" stroke="#2c64c8" stroke-width="1.8"/></svg>
<svg style="left:1002.5px;top:448.0px;" width="16" height="16" viewBox="0 0 16 16" preserveAspectRatio="none"><path d="M2 15V9Q2 2 15 2" fill="none" stroke="#222" stroke-width="1.6"/><path d="M3.5 12Q3.5 4.5 13 4" fill="none" stroke="#2c64c8" stroke-width="2"/></svg>
<svg style="left:1002.5px;top:470.0px;" width="16" height="16" viewBox="0 0 16 16" preserveAspectRatio="none"><path d="M7 3L8.5 6.5L12 5L10.5 8.5L14 10L10 10.5L10 14L7.5 11.5L4.5 13.5L5 10L1.5 8.5L5 7.5Z" fill="#f0c020" stroke="#c03010" stroke-width="1"/><ellipse cx="6" cy="9" rx="2.2" ry="2" fill="#e02020" stroke="none" stroke-width="1.2"/><path d="M11 1.5H15.5V5" fill="#dce8fc" stroke="#8aa8dc" stroke-width="0.8"/><line x1="9" y1="5" x2="13" y2="2.5" stroke="#c05020" stroke-width="1.4"/></svg>
<div style="left:998.9px;top:495.7px;width:25.7px;height:103.3px;background:#edebde;border-left:1px solid #fff;border-top:1.5px solid #fff;border-right:1px solid #c6c2b0;border-bottom:1.6px solid #c6c2b0"></div>
<div style="left:1001.9px;top:498.8px;width:18.7px;height:1.2px;background:#fff"></div>
<div style="left:1001.9px;top:500.0px;width:18.7px;height:1.2px;background:#bdb9a6"></div>
<div style="left:1001.9px;top:502.4px;width:18.7px;height:1.2px;background:#fff"></div>
<div style="left:1001.9px;top:503.6px;width:18.7px;height:1.2px;background:#bdb9a6"></div>
<svg style="left:1002.5px;top:508.5px;" width="16" height="16" viewBox="0 0 16 16" preserveAspectRatio="none"><rect x="1" y="1" width="7" height="5" fill="#cfe0f8" stroke="#3c64a8" stroke-width="1"/><rect x="8" y="8" width="7.5" height="6" fill="#cfe0f8" stroke="#3c64a8" stroke-width="1"/><rect x="3.5" y="3.5" width="9" height="8" fill="#4878c0" stroke="#3c64a8" stroke-width="1"/></svg>
<svg style="left:1002.5px;top:530.6px;" width="16" height="16" viewBox="0 0 16 16" preserveAspectRatio="none"><rect x="3.5" y="4" width="9" height="7.5" fill="#4878c0" stroke="#3c64a8" stroke-width="1"/><rect x="1" y="1" width="7" height="5" fill="#cfe0f8" stroke="#3c64a8" stroke-width="1"/><rect x="8" y="9" width="7.5" height="5.5" fill="#cfe0f8" stroke="#3c64a8" stroke-width="1"/></svg>
<svg style="left:1002.5px;top:552.6px;" width="16" height="16" viewBox="0 0 16 16" preserveAspectRatio="none"><rect x="5" y="6" width="10" height="8.5" fill="#b0c8ec" stroke="#3c64a8" stroke-width="1"/><rect x="1.5" y="1.5" width="11" height="8.5" fill="#4878c0" stroke="#3c64a8" stroke-width="1"/></svg>
<svg style="left:1002.5px;top:574.9px;" width="16" height="16" viewBox="0 0 16 16" preserveAspectRatio="none"><rect x="1.5" y="1.5" width="10" height="8" fill="#4878c0" stroke="#3c64a8" stroke-width="1"/><rect x="5" y="6" width="10" height="8.5" fill="#b0c8ec" stroke="#3c64a8" stroke-width="1"/><rect x="5.5" y="6.5" width="9" height="2" fill="#e4eefc" stroke="none" stroke-width="1"/></svg>
<div style="left:474.9px;top:726.1px;width:2.7px;height:15.4px;background:#a9c9f2;border-radius:1px"></div>
<div style="left:473.7px;top:725.8px;width:5.1px;height:2.3px;background:#b9d3f4"></div>
<div style="left:473.7px;top:739.6px;width:5.1px;height:2.3px;background:#b9d3f4"></div>
</div><svg id="cad" width="840" height="400" viewBox="0 0 840 400" style="position:absolute;left:0;top:0"><path d="M152.2 181.6L152.2 226.2A73.4 46.8 0 0 0 299.0 226.2L299.0 181.6" stroke="#cfcfcf" stroke-width="1.0" fill="none"/><path d="M159.5 181.6L159.5 226.2A66.1 42.2 0 0 0 291.7 226.2L291.7 181.6" stroke="#cfcfcf" stroke-width="1.0" fill="none"/><path d="M152.2 181.6A3.67 2.34 0 0 1 159.5 181.6" stroke="#cfcfcf" stroke-width="1.0" fill="none"/><path d="M291.7 181.6A3.67 2.34 0 0 1 299.0 181.6" stroke="#cfcfcf" stroke-width="1.0" fill="none"/><line x1="159.5" y1="181.8" x2="291.7" y2="181.8" stroke="#cfcfcf" stroke-width="1.05"/><path d="M159.5 217.1A68.3 43.6 0 0 0 291.7 217.1" stroke="#cfcfcf" stroke-width="1.0" fill="none"/><line x1="207.2" y1="249.4" x2="201.1" y2="265.5" stroke="#cfcfcf" stroke-width="1.05"/><line x1="243.9" y1="249.4" x2="250.1" y2="265.5" stroke="#cfcfcf" stroke-width="1.05"/><line x1="152.2" y1="123.0" x2="152.2" y2="179.3" stroke="#f000f0" stroke-width="1.05"/><line x1="299.0" y1="123.0" x2="299.0" y2="179.3" stroke="#f000f0" stroke-width="1.05"/><line x1="152.2" y1="128.2" x2="299.0" y2="128.2" stroke="#f000f0" stroke-width="1.05"/><path d="M152.2 128.2L166.2 130.4L166.2 126.0Z" fill="#f000f0"/><path d="M299.0 128.2L285.0 126.0L285.0 130.4Z" fill="#f000f0"/><text transform="translate(224.3,125.6) scale(0.8203,0.5208) rotate(0) scale(0.85,1) skewX(-14)" font-family="DejaVu Sans, Liberation Sans, sans-serif" font-weight="200" font-size="25" fill="#f000f0" stroke="#f000f0" stroke-width="0.7" text-anchor="middle">600</text><line x1="157.0" y1="180.6" x2="208.8" y2="152.2" stroke="#f000f0" stroke-width="1.05"/><path d="M156.6 181.0L171.5 175.9L168.9 171.2Z" fill="#f000f0"/><text transform="translate(191.2,158.7) scale(0.8203,0.5208) rotate(-41.5) scale(0.85,1) skewX(-14)" font-family="DejaVu Sans, Liberation Sans, sans-serif" font-weight="200" font-size="25" fill="#f000f0" stroke="#f000f0" stroke-width="0.7" text-anchor="middle">R15</text><line x1="226.5" y1="225.5" x2="100.0" y2="285.0" stroke="#f000f0" stroke-width="1.05"/><path d="M167.8 253.6L153.1 257.7L155.4 262.4Z" fill="#f000f0"/><text transform="translate(117.5,273.5) scale(0.8203,0.5208) rotate(-36) scale(0.85,1) skewX(-14)" font-family="DejaVu Sans, Liberation Sans, sans-serif" font-weight="200" font-size="25" fill="#f000f0" stroke="#f000f0" stroke-width="0.7" text-anchor="middle">R300</text><line x1="299.0" y1="179.2" x2="380.7" y2="179.2" stroke="#f000f0" stroke-width="1.05"/><line x1="292.7" y1="210.5" x2="346.9" y2="210.5" stroke="#f000f0" stroke-width="1.05"/><line x1="234.5" y1="249.6" x2="346.9" y2="249.6" stroke="#f000f0" stroke-width="1.05"/><line x1="225.5" y1="273.3" x2="380.7" y2="273.3" stroke="#f000f0" stroke-width="1.05"/><line x1="338.6" y1="179.2" x2="338.6" y2="249.6" stroke="#f000f0" stroke-width="1.05"/><line x1="373.2" y1="179.2" x2="373.2" y2="273.3" stroke="#f000f0" stroke-width="1.05"/><path d="M338.6 179.2L335.3 188.2L341.9 188.2Z" fill="#f000f0"/><path d="M338.6 210.5L341.9 201.5L335.3 201.5Z" fill="#f000f0"/><path d="M338.6 210.5L335.3 219.5L341.9 219.5Z" fill="#f000f0"/><path d="M338.6 249.6L341.9 240.6L335.3 240.6Z" fill="#f000f0"/><path d="M373.2 179.2L369.9 188.2L376.5 188.2Z" fill="#f000f0"/><path d="M373.2 273.3L376.5 264.3L369.9 264.3Z" fill="#f000f0"/><text transform="translate(334.0,195.0) scale(0.8203,0.5208) rotate(-90) scale(0.85,1) skewX(-14)" font-family="DejaVu Sans, Liberation Sans, sans-serif" font-weight="200" font-size="25" fill="#f000f0" stroke="#f000f0" stroke-width="0.7" text-anchor="middle">200</text><text transform="translate(334.0,230.0) scale(0.8203,0.5208) rotate(-90) scale(0.85,1) skewX(-14)" font-family="DejaVu Sans, Liberation Sans, sans-serif" font-weight="200" font-size="25" fill="#f000f0" stroke="#f000f0" stroke-width="0.7" text-anchor="middle">250</text><text transform="translate(369.5,226.0) scale(0.8203,0.5208) rotate(-90) scale(0.85,1) skewX(-14)" font-family="DejaVu Sans, Liberation Sans, sans-serif" font-weight="200" font-size="25" fill="#f000f0" stroke="#f000f0" stroke-width="0.7" text-anchor="middle">600</text><line x1="207.2" y1="249.4" x2="207.2" y2="294.0" stroke="#f000f0" stroke-width="1.05"/><line x1="243.9" y1="249.4" x2="243.9" y2="294.0" stroke="#f000f0" stroke-width="1.05"/><line x1="176.7" y1="291.0" x2="274.4" y2="291.0" stroke="#f000f0" stroke-width="1.05"/><path d="M207.2 291.0L193.2 288.8L193.2 293.2Z" fill="#f000f0"/><path d="M243.9 291.0L257.9 293.2L257.9 288.8Z" fill="#f000f0"/><text transform="translate(223.5,289.3) scale(0.8203,0.5208) rotate(0) scale(0.85,1) skewX(-14)" font-family="DejaVu Sans, Liberation Sans, sans-serif" font-weight="200" font-size="25" fill="#f000f0" stroke="#f000f0" stroke-width="0.7" text-anchor="middle">150</text><line x1="201.1" y1="265.5" x2="201.1" y2="331.0" stroke="#f000f0" stroke-width="1.05"/><line x1="250.1" y1="265.5" x2="250.1" y2="331.0" stroke="#f000f0" stroke-width="1.05"/><line x1="201.1" y1="326.3" x2="250.1" y2="326.3" stroke="#f000f0" stroke-width="1.05"/><path d="M201.1 326.3L215.1 328.5L215.1 324.1Z" fill="#f000f0"/><path d="M250.1 326.3L236.1 324.1L236.1 328.5Z" fill="#f000f0"/><text transform="translate(225.0,325.0) scale(0.8203,0.5208) rotate(0) scale(0.85,1) skewX(-14)" font-family="DejaVu Sans, Liberation Sans, sans-serif" font-weight="200" font-size="25" fill="#f000f0" stroke="#f000f0" stroke-width="0.7" text-anchor="middle">200</text><rect x="77.4" y="327.5" width="8.4" height="5" fill="none" stroke="#d4d4d4" stroke-width="1"/><line x1="81.6" y1="327.5" x2="81.6" y2="308.2" stroke="#d4d4d4" stroke-width="1"/><path d="M78.6 308.2L81.6 302.8L84.6 308.2Z" stroke="#d4d4d4" stroke-width="0.9" fill="none"/><line x1="85.8" y1="330.0" x2="114.7" y2="330.0" stroke="#d4d4d4" stroke-width="1"/><path d="M114.7 328.0L123.1 330.0L114.7 332.0Z" stroke="#d4d4d4" stroke-width="0.9" fill="none"/><text transform="translate(82.9,299.2) scale(0.8203,0.5208)" font-family="Liberation Sans, sans-serif" font-size="15.5" fill="#d4d4d4" text-anchor="middle">Y</text><text transform="translate(130.9,333.0) scale(0.8203,0.5208)" font-family="Liberation Sans, sans-serif" font-size="15.5" fill="#d4d4d4">X</text><rect x="542.8" y="191.5" width="8.4" height="5" fill="none" stroke="#d4d4d4" stroke-width="1"/><line x1="547.0" y1="191.5" x2="547.0" y2="196.5" stroke="#d4d4d4" stroke-width="0.9"/><line x1="547.0" y1="191.5" x2="547.0" y2="172.4" stroke="#d4d4d4" stroke-width="1"/><path d="M544.0 172.4L547.0 167.0L550.0 172.4Z" stroke="#d4d4d4" stroke-width="0.9" fill="none"/><line x1="551.2" y1="194.0" x2="579.9" y2="194.0" stroke="#d4d4d4" stroke-width="1"/><path d="M579.9 192.0L588.3 194.0L579.9 196.0Z" stroke="#d4d4d4" stroke-width="0.9" fill="none"/><text transform="translate(548.3,163.4) scale(0.8203,0.5208)" font-family="Liberation Sans, sans-serif" font-size="15.5" fill="#d4d4d4" text-anchor="middle">Y</text><text transform="translate(596.1,197.0) scale(0.8203,0.5208)" font-family="Liberation Sans, sans-serif" font-size="15.5" fill="#d4d4d4">X</text><path d="M459.5 105.2L459.5 202.3A152.0 96.7 0 0 0 763.5 202.3L763.5 105.2" stroke="#d8dce0" stroke-width="1.0" fill="none"/><path d="M474.5 105.2L474.5 202.3A137.0 87.2 0 0 0 748.5 202.3L748.5 105.2" stroke="#d8dce0" stroke-width="1.0" fill="none"/><rect x="439" y="77.3" width="5" height="3" fill="none" stroke="#e8e8e8" stroke-width="1"/></svg></body></html>
